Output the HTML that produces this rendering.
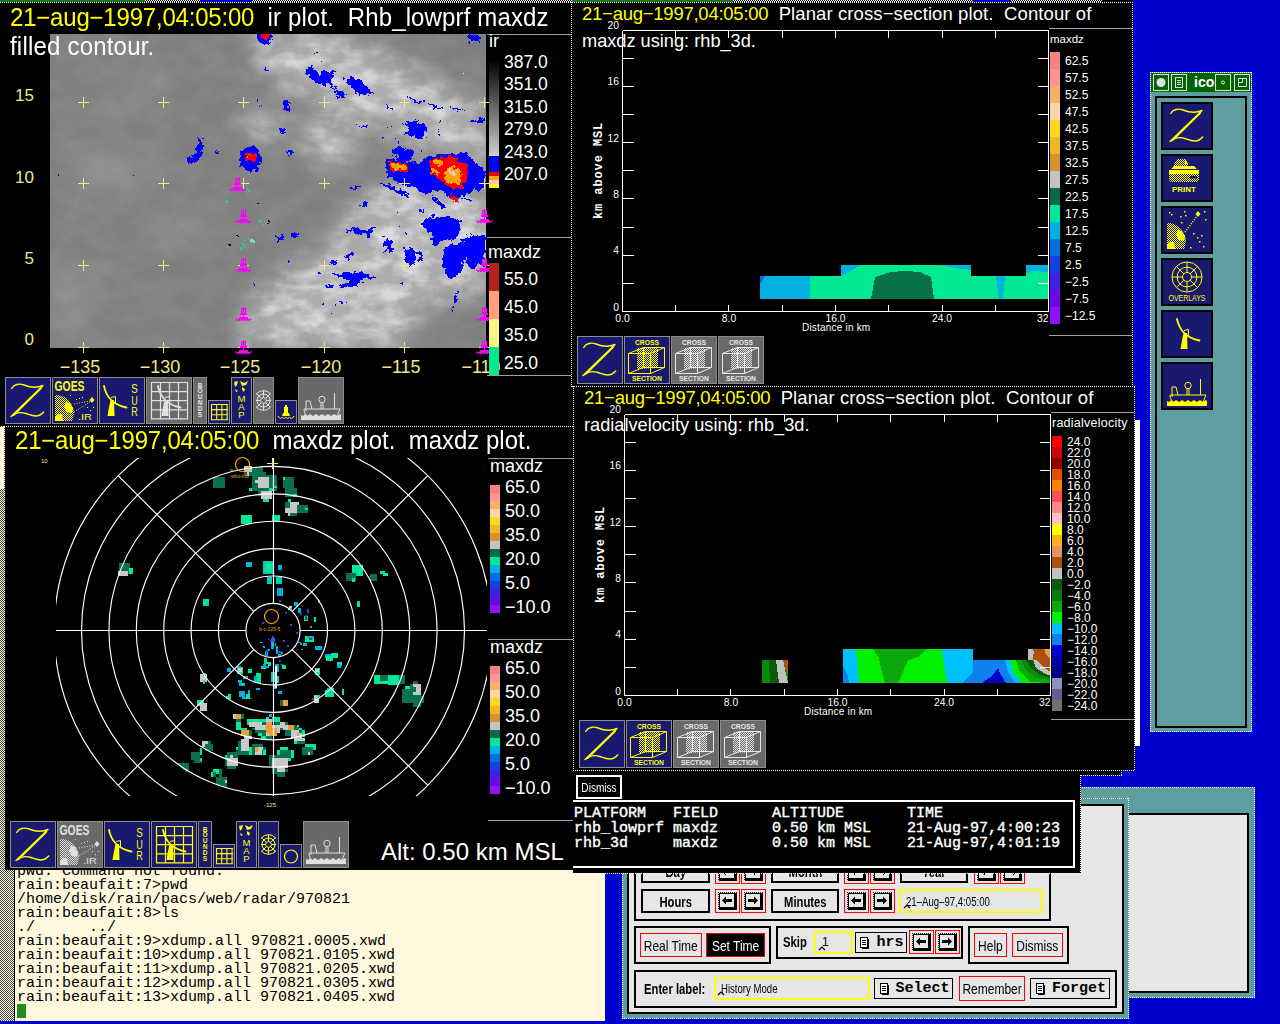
<!DOCTYPE html>
<html><head><meta charset="utf-8"><style>
*{margin:0;padding:0;box-sizing:border-box}
html,body{width:1280px;height:1024px;overflow:hidden;background:#0000cd;font-family:"Liberation Sans",sans-serif;}
.a{position:absolute}
.w{position:absolute;overflow:hidden}
.pg{position:absolute;width:1280px;height:1024px}
.t{position:absolute;white-space:nowrap;color:#fff;line-height:1}
.y{color:#ffff00}
.ly{color:#f0e68c}
.mono{font-family:"Liberation Mono",monospace}
.serif{font-family:"Liberation Serif",serif}
svg{position:absolute;left:0;top:0;overflow:visible}
</style></head><body>
<div class="w" style="left:0px;top:420px;width:605px;height:601px;background:#fff8dc;"><div class="pg" style="left:0px;top:-420px"><svg width="1280" height="1024" viewBox="0 0 1280 1024"><defs><pattern id="chkY" width="2" height="2" patternUnits="userSpaceOnUse"><rect width="1" height="1" fill="#ffff00"/><rect x="1" y="1" width="1" height="1" fill="#ffff00"/></pattern><pattern id="chkW" width="2" height="2" patternUnits="userSpaceOnUse"><rect width="1" height="1" fill="#e0e0e0"/><rect x="1" y="1" width="1" height="1" fill="#e0e0e0"/></pattern><pattern id="hatch" width="2" height="2" patternUnits="userSpaceOnUse"><rect width="2" height="2" fill="#fff8dc"/><rect width="1" height="1" fill="#444"/><rect x="1" y="1" width="1" height="1" fill="#444"/></pattern><pattern id="stip" width="2" height="2" patternUnits="userSpaceOnUse"><rect width="2" height="2" fill="#e6e6e6"/><rect width="1" height="1" fill="#222"/><rect x="1" y="1" width="1" height="1" fill="#222"/></pattern></defs><rect x="0" y="420" width="14" height="601" fill="url(#hatch)"/><rect x="0" y="427" width="4" height="62" fill="#fff8dc"/></svg><div class="a" style="left:14px;top:420px;width:1px;height:601px;background:#000;"></div><div class="t mono" style="left:17px;top:865px;font-size:15px;line-height:14px;color:#000">pwd: Command not found.</div><div class="t mono" style="left:17px;top:879px;font-size:15px;line-height:14px;color:#000">rain:beaufait:7&gt;pwd</div><div class="t mono" style="left:17px;top:893px;font-size:15px;line-height:14px;color:#000">/home/disk/rain/pacs/web/radar/970821</div><div class="t mono" style="left:17px;top:907px;font-size:15px;line-height:14px;color:#000">rain:beaufait:8&gt;ls</div><div class="t mono" style="left:17px;top:921px;font-size:15px;line-height:14px;color:#000">./&nbsp;&nbsp;&nbsp;&nbsp;&nbsp;&nbsp;../</div><div class="t mono" style="left:17px;top:935px;font-size:15px;line-height:14px;color:#000">rain:beaufait:9&gt;xdump.all 970821.0005.xwd</div><div class="t mono" style="left:17px;top:949px;font-size:15px;line-height:14px;color:#000">rain:beaufait:10&gt;xdump.all 970821.0105.xwd</div><div class="t mono" style="left:17px;top:963px;font-size:15px;line-height:14px;color:#000">rain:beaufait:11&gt;xdump.all 970821.0205.xwd</div><div class="t mono" style="left:17px;top:977px;font-size:15px;line-height:14px;color:#000">rain:beaufait:12&gt;xdump.all 970821.0305.xwd</div><div class="t mono" style="left:17px;top:991px;font-size:15px;line-height:14px;color:#000">rain:beaufait:13&gt;xdump.all 970821.0405.xwd</div><div class="a" style="left:17px;top:1004px;width:9px;height:14px;background:#228b22;"></div></div></div>
<div class="a" style="left:1000px;top:787px;width:255px;height:211px;background:#5f9ea0;"></div><div class="a" style="left:1128px;top:813px;width:121px;height:180px;background:#000;"></div><div class="a" style="left:1128px;top:815px;width:119px;height:176px;background:#e6e6e6;"></div>
<div class="a" style="left:1082px;top:787px;width:173px;height:1px;background:repeating-linear-gradient(90deg,#fff 0 1px,transparent 1px 2px)"></div>
<div class="a" style="left:1254px;top:787px;width:1px;height:211px;background:repeating-linear-gradient(180deg,#fff 0 1px,transparent 1px 2px)"></div>
<div class="a" style="left:1130px;top:997px;width:125px;height:1px;background:repeating-linear-gradient(90deg,#fff 0 1px,transparent 1px 2px)"></div>
<div class="w" style="left:622px;top:798px;width:507px;height:221px;background:#5f9ea0;"><div class="pg" style="left:-622px;top:-798px"><div class="a" style="left:621px;top:797px;width:509px;height:222px;background:#5f9ea0;"></div><div class="a" style="left:627px;top:804px;width:497px;height:210px;background:#000;"></div><div class="a" style="left:629px;top:806px;width:493px;height:206px;background:#e6e6e6;"></div><div class="a" style="left:634px;top:810px;width:417px;height:111px;border:2px solid #000"></div><div class="a" style="left:641px;top:860px;width:69px;height:23px;border:2px solid #000;background:#e6e6e6;color:#000;font-family:'Liberation Sans',sans-serif;font-size:15px;font-weight:bold;display:flex;justify-content:center;align-items:center;white-space:nowrap;"><span style="display:inline-block;transform:scaleX(0.75)">Day</span></div><div class="a" style="left:771px;top:860px;width:68px;height:23px;border:2px solid #000;background:#e6e6e6;color:#000;font-family:'Liberation Sans',sans-serif;font-size:15px;font-weight:bold;display:flex;justify-content:center;align-items:center;white-space:nowrap;"><span style="display:inline-block;transform:scaleX(0.75)">Month</span></div><div class="a" style="left:900px;top:860px;width:68px;height:23px;border:2px solid #000;background:#e6e6e6;color:#000;font-family:'Liberation Sans',sans-serif;font-size:15px;font-weight:bold;display:flex;justify-content:center;align-items:center;white-space:nowrap;"><span style="display:inline-block;transform:scaleX(0.75)">Year</span></div><div class="a" style="left:641px;top:889px;width:69px;height:24px;border:2px solid #000;background:#e6e6e6;color:#000;font-family:'Liberation Sans',sans-serif;font-size:15px;font-weight:bold;display:flex;justify-content:center;align-items:center;white-space:nowrap;"><span style="display:inline-block;transform:scaleX(0.75)">Hours</span></div><div class="a" style="left:771px;top:889px;width:68px;height:24px;border:2px solid #000;background:#e6e6e6;color:#000;font-family:'Liberation Sans',sans-serif;font-size:15px;font-weight:bold;display:flex;justify-content:center;align-items:center;white-space:nowrap;"><span style="display:inline-block;transform:scaleX(0.75)">Minutes</span></div><div class="a" style="left:899px;top:889px;width:144px;height:24px;border:2px solid #ffff00;background:#e6e6e6"></div><div class="t " style="left:906px;top:896px;font-size:12px;color:#000"><span style="display:inline-block;transform-origin:0 50%;transform:scaleX(0.8)">21–Aug–97,4:05:00</span></div><div class="a" style="left:634px;top:926px;width:137px;height:38px;border:2px solid #000"></div><div class="a" style="left:640px;top:933px;width:62px;height:24px;border:1px solid #ff0000;background:#e6e6e6;color:#000;font-family:'Liberation Sans',sans-serif;font-size:15px;font-weight:normal;display:flex;justify-content:center;align-items:center;white-space:nowrap;"><span style="display:inline-block;transform:scaleX(0.8)">Real Time</span></div><div class="a" style="left:706px;top:933px;width:59px;height:24px;border:1px solid #ff0000;background:#000;color:#fff;font-family:'Liberation Sans',sans-serif;font-size:15px;font-weight:normal;display:flex;justify-content:center;align-items:center;white-space:nowrap;"><span style="display:inline-block;transform:scaleX(0.8)">Set Time</span></div><div class="a" style="left:776px;top:926px;width:187px;height:33px;border:2px solid #000"></div><div class="t " style="left:783px;top:934px;font-size:15px;color:#000;font-weight:bold"><span style="display:inline-block;transform-origin:0 50%;transform:scaleX(0.75)">Skip</span></div><div class="a" style="left:814px;top:931px;width:39px;height:23px;border:2px solid #ffff00"></div><div class="t " style="left:822px;top:936px;font-size:12px;color:#000">1</div><div class="a" style="left:855px;top:932px;width:52px;height:21px;border:1px solid #000;background:#e6e6e6;color:#000;font-family:'Liberation Mono',monospace;font-size:15px;font-weight:bold;display:flex;justify-content:center;align-items:center;white-space:nowrap;">&nbsp;&nbsp;hrs</div><div class="a" style="left:968px;top:926px;width:101px;height:38px;border:2px solid #000"></div><div class="a" style="left:974px;top:933px;width:33px;height:24px;border:1px solid #ff0000;background:#e6e6e6;color:#000;font-family:'Liberation Sans',sans-serif;font-size:15px;font-weight:normal;display:flex;justify-content:center;align-items:center;white-space:nowrap;"><span style="display:inline-block;transform:scaleX(0.8)">Help</span></div><div class="a" style="left:1012px;top:933px;width:51px;height:24px;border:1px solid #ff0000;background:#e6e6e6;color:#000;font-family:'Liberation Sans',sans-serif;font-size:15px;font-weight:normal;display:flex;justify-content:center;align-items:center;white-space:nowrap;"><span style="display:inline-block;transform:scaleX(0.8)">Dismiss</span></div><div class="a" style="left:634px;top:970px;width:483px;height:38px;border:2px solid #000"></div><div class="t " style="left:644px;top:981px;font-size:15px;color:#000;font-weight:bold"><span style="display:inline-block;transform-origin:0 50%;transform:scaleX(0.75)">Enter label:</span></div><div class="a" style="left:714px;top:977px;width:156px;height:23px;border:2px solid #ffff00"></div><div class="t " style="left:721px;top:983px;font-size:12px;color:#000"><span style="display:inline-block;transform-origin:0 50%;transform:scaleX(0.8)">History Mode</span></div><div class="a" style="left:874px;top:978px;width:79px;height:21px;border:1px solid #000;background:#e6e6e6;color:#000;font-family:'Liberation Mono',monospace;font-size:15px;font-weight:bold;display:flex;justify-content:center;align-items:center;white-space:nowrap;">&nbsp;&nbsp;Select</div><div class="a" style="left:959px;top:976px;width:66px;height:25px;border:1px solid #ff0000;background:#e6e6e6;color:#000;font-family:'Liberation Sans',sans-serif;font-size:15px;font-weight:normal;display:flex;justify-content:center;align-items:center;white-space:nowrap;"><span style="display:inline-block;transform:scaleX(0.8)">Remember</span></div><div class="a" style="left:1030px;top:978px;width:80px;height:21px;border:1px solid #000;background:#e6e6e6;color:#000;font-family:'Liberation Mono',monospace;font-size:15px;font-weight:bold;display:flex;justify-content:center;align-items:center;white-space:nowrap;">&nbsp;&nbsp;Forget</div><svg width="1280" height="1024" viewBox="0 0 1280 1024"><defs><pattern id="chkY" width="2" height="2" patternUnits="userSpaceOnUse"><rect width="1" height="1" fill="#ffff00"/><rect x="1" y="1" width="1" height="1" fill="#ffff00"/></pattern><pattern id="chkW" width="2" height="2" patternUnits="userSpaceOnUse"><rect width="1" height="1" fill="#e0e0e0"/><rect x="1" y="1" width="1" height="1" fill="#e0e0e0"/></pattern><pattern id="hatch" width="2" height="2" patternUnits="userSpaceOnUse"><rect width="2" height="2" fill="#fff8dc"/><rect width="1" height="1" fill="#444"/><rect x="1" y="1" width="1" height="1" fill="#444"/></pattern><pattern id="stip" width="2" height="2" patternUnits="userSpaceOnUse"><rect width="2" height="2" fill="#e6e6e6"/><rect width="1" height="1" fill="#222"/><rect x="1" y="1" width="1" height="1" fill="#222"/></pattern></defs><g transform="translate(715 860)"><rect x="0.5" y="0.5" width="24" height="23" fill="#e6e6e6" stroke="#ff0000" stroke-width="1"/><rect x="3" y="3" width="19" height="18" fill="url(#stip)"/><rect x="4.5" y="4.5" width="15" height="14" fill="#e6e6e6" stroke="#000" stroke-width="1"/><rect x="20" y="4" width="2" height="17" fill="#000"/><rect x="4" y="19" width="18" height="2" fill="#000"/><path d="M7 11.5L11 7.5V10H17V13H11V15.5Z" fill="#000"/></g><g transform="translate(741 860)"><rect x="0.5" y="0.5" width="24" height="23" fill="#e6e6e6" stroke="#ff0000" stroke-width="1"/><rect x="3" y="3" width="19" height="18" fill="url(#stip)"/><rect x="4.5" y="4.5" width="15" height="14" fill="#e6e6e6" stroke="#000" stroke-width="1"/><rect x="20" y="4" width="2" height="17" fill="#000"/><rect x="4" y="19" width="18" height="2" fill="#000"/><path d="M17 11.5L13 7.5V10H7V13H13V15.5Z" fill="#000"/></g><g transform="translate(844 860)"><rect x="0.5" y="0.5" width="24" height="23" fill="#e6e6e6" stroke="#ff0000" stroke-width="1"/><rect x="3" y="3" width="19" height="18" fill="url(#stip)"/><rect x="4.5" y="4.5" width="15" height="14" fill="#e6e6e6" stroke="#000" stroke-width="1"/><rect x="20" y="4" width="2" height="17" fill="#000"/><rect x="4" y="19" width="18" height="2" fill="#000"/><path d="M7 11.5L11 7.5V10H17V13H11V15.5Z" fill="#000"/></g><g transform="translate(870 860)"><rect x="0.5" y="0.5" width="24" height="23" fill="#e6e6e6" stroke="#ff0000" stroke-width="1"/><rect x="3" y="3" width="19" height="18" fill="url(#stip)"/><rect x="4.5" y="4.5" width="15" height="14" fill="#e6e6e6" stroke="#000" stroke-width="1"/><rect x="20" y="4" width="2" height="17" fill="#000"/><rect x="4" y="19" width="18" height="2" fill="#000"/><path d="M17 11.5L13 7.5V10H7V13H13V15.5Z" fill="#000"/></g><g transform="translate(974 860)"><rect x="0.5" y="0.5" width="24" height="23" fill="#e6e6e6" stroke="#ff0000" stroke-width="1"/><rect x="3" y="3" width="19" height="18" fill="url(#stip)"/><rect x="4.5" y="4.5" width="15" height="14" fill="#e6e6e6" stroke="#000" stroke-width="1"/><rect x="20" y="4" width="2" height="17" fill="#000"/><rect x="4" y="19" width="18" height="2" fill="#000"/><path d="M7 11.5L11 7.5V10H17V13H11V15.5Z" fill="#000"/></g><g transform="translate(1000 860)"><rect x="0.5" y="0.5" width="24" height="23" fill="#e6e6e6" stroke="#ff0000" stroke-width="1"/><rect x="3" y="3" width="19" height="18" fill="url(#stip)"/><rect x="4.5" y="4.5" width="15" height="14" fill="#e6e6e6" stroke="#000" stroke-width="1"/><rect x="20" y="4" width="2" height="17" fill="#000"/><rect x="4" y="19" width="18" height="2" fill="#000"/><path d="M17 11.5L13 7.5V10H7V13H13V15.5Z" fill="#000"/></g><g transform="translate(715 889)"><rect x="0.5" y="0.5" width="24" height="23" fill="#e6e6e6" stroke="#ff0000" stroke-width="1"/><rect x="3" y="3" width="19" height="18" fill="url(#stip)"/><rect x="4.5" y="4.5" width="15" height="14" fill="#e6e6e6" stroke="#000" stroke-width="1"/><rect x="20" y="4" width="2" height="17" fill="#000"/><rect x="4" y="19" width="18" height="2" fill="#000"/><path d="M7 11.5L11 7.5V10H17V13H11V15.5Z" fill="#000"/></g><g transform="translate(741 889)"><rect x="0.5" y="0.5" width="24" height="23" fill="#e6e6e6" stroke="#ff0000" stroke-width="1"/><rect x="3" y="3" width="19" height="18" fill="url(#stip)"/><rect x="4.5" y="4.5" width="15" height="14" fill="#e6e6e6" stroke="#000" stroke-width="1"/><rect x="20" y="4" width="2" height="17" fill="#000"/><rect x="4" y="19" width="18" height="2" fill="#000"/><path d="M17 11.5L13 7.5V10H7V13H13V15.5Z" fill="#000"/></g><g transform="translate(844 889)"><rect x="0.5" y="0.5" width="24" height="23" fill="#e6e6e6" stroke="#ff0000" stroke-width="1"/><rect x="3" y="3" width="19" height="18" fill="url(#stip)"/><rect x="4.5" y="4.5" width="15" height="14" fill="#e6e6e6" stroke="#000" stroke-width="1"/><rect x="20" y="4" width="2" height="17" fill="#000"/><rect x="4" y="19" width="18" height="2" fill="#000"/><path d="M7 11.5L11 7.5V10H17V13H11V15.5Z" fill="#000"/></g><g transform="translate(870 889)"><rect x="0.5" y="0.5" width="24" height="23" fill="#e6e6e6" stroke="#ff0000" stroke-width="1"/><rect x="3" y="3" width="19" height="18" fill="url(#stip)"/><rect x="4.5" y="4.5" width="15" height="14" fill="#e6e6e6" stroke="#000" stroke-width="1"/><rect x="20" y="4" width="2" height="17" fill="#000"/><rect x="4" y="19" width="18" height="2" fill="#000"/><path d="M17 11.5L13 7.5V10H7V13H13V15.5Z" fill="#000"/></g><g transform="translate(909 930)"><rect x="0.5" y="0.5" width="24" height="23" fill="#e6e6e6" stroke="#ff0000" stroke-width="1"/><rect x="3" y="3" width="19" height="18" fill="url(#stip)"/><rect x="4.5" y="4.5" width="15" height="14" fill="#e6e6e6" stroke="#000" stroke-width="1"/><rect x="20" y="4" width="2" height="17" fill="#000"/><rect x="4" y="19" width="18" height="2" fill="#000"/><path d="M7 11.5L11 7.5V10H17V13H11V15.5Z" fill="#000"/></g><g transform="translate(935 930)"><rect x="0.5" y="0.5" width="24" height="23" fill="#e6e6e6" stroke="#ff0000" stroke-width="1"/><rect x="3" y="3" width="19" height="18" fill="url(#stip)"/><rect x="4.5" y="4.5" width="15" height="14" fill="#e6e6e6" stroke="#000" stroke-width="1"/><rect x="20" y="4" width="2" height="17" fill="#000"/><rect x="4" y="19" width="18" height="2" fill="#000"/><path d="M17 11.5L13 7.5V10H7V13H13V15.5Z" fill="#000"/></g><g transform="translate(860 937)"><rect x="0.5" y="0.5" width="7" height="10" fill="#fff" stroke="#000"/><path d="M2 3.5H6M2 5.5H6M2 7.5H6" stroke="#000" stroke-width="1"/><path d="M8.5 2V11.5H2" stroke="#000" fill="none"/></g><g transform="translate(880 983)"><rect x="0.5" y="0.5" width="7" height="10" fill="#fff" stroke="#000"/><path d="M2 3.5H6M2 5.5H6M2 7.5H6" stroke="#000" stroke-width="1"/><path d="M8.5 2V11.5H2" stroke="#000" fill="none"/></g><g transform="translate(1036 983)"><rect x="0.5" y="0.5" width="7" height="10" fill="#fff" stroke="#000"/><path d="M2 3.5H6M2 5.5H6M2 7.5H6" stroke="#000" stroke-width="1"/><path d="M8.5 2V11.5H2" stroke="#000" fill="none"/></g><path d="M904 908L907 905L910 908M819 950L822 947L825 950M718 995L721 992L724 995" stroke="#000" stroke-width="1.2" fill="none"/></svg></div></div>
<div class="a" style="left:622px;top:798px;width:1px;height:221px;background:repeating-linear-gradient(180deg,#fff 0 1px,transparent 1px 2px)"></div>
<div class="a" style="left:622px;top:1018px;width:507px;height:1px;background:repeating-linear-gradient(90deg,#fff 0 1px,transparent 1px 2px)"></div>
<div class="a" style="left:1128px;top:798px;width:1px;height:221px;background:repeating-linear-gradient(180deg,#fff 0 1px,transparent 1px 2px)"></div>
<div class="a" style="left:1081px;top:798px;width:48px;height:1px;background:repeating-linear-gradient(90deg,#fff 0 1px,transparent 1px 2px)"></div>
<div class="w" style="left:5px;top:427px;width:569px;height:443px;background:#000;"><div class="pg" style="left:-5px;top:-427px"><svg width="1280" height="1024" viewBox="0 0 1280 1024"><g shape-rendering="crispEdges"><rect x="213" y="477" width="12" height="11" fill="#0b7050"/><rect x="230" y="469" width="3" height="2" fill="#0b7050"/><rect x="249" y="467" width="14" height="9" fill="#0b7050"/><rect x="252" y="475" width="25" height="16" fill="#0b7050"/><rect x="244" y="472" width="5" height="4" fill="#0b7050"/><rect x="258" y="491" width="3" height="5" fill="#0b7050"/><rect x="263" y="472" width="3" height="4" fill="#0b7050"/><rect x="244" y="466" width="8" height="6" fill="#c8c8c8"/><rect x="247" y="472" width="2" height="4" fill="#c8c8c8"/><rect x="258" y="477" width="11" height="11" fill="#c8c8c8"/><rect x="255" y="480" width="3" height="3" fill="#c8c8c8"/><rect x="249" y="488" width="3" height="3" fill="#00e898"/><rect x="269" y="488" width="4" height="3" fill="#00e898"/><rect x="274" y="486" width="3" height="2" fill="#00e898"/><rect x="261" y="491" width="11" height="8" fill="#c8c8c8"/><rect x="263" y="499" width="6" height="3" fill="#00e898"/><rect x="283" y="477" width="11" height="11" fill="#0b7050"/><rect x="285" y="488" width="12" height="9" fill="#0b7050"/><rect x="283" y="477" width="2" height="3" fill="#00e898"/><rect x="293" y="494" width="4" height="3" fill="#00e898"/><rect x="288" y="499" width="3" height="3" fill="#00e898"/><rect x="285" y="502" width="5" height="6" fill="#0b7050"/><rect x="290" y="502" width="9" height="11" fill="#c8c8c8"/><rect x="285" y="508" width="5" height="5" fill="#c8c8c8"/><rect x="288" y="513" width="2" height="3" fill="#c8c8c8"/><rect x="297" y="505" width="11" height="8" fill="#0b7050"/><rect x="290" y="513" width="7" height="3" fill="#0b7050"/><rect x="305" y="508" width="3" height="2" fill="#00e898"/><rect x="241" y="515" width="11" height="9" fill="#00e898"/><rect x="272" y="515" width="8" height="6" fill="#00e898"/><rect x="119" y="563" width="11" height="11" fill="#0b7050"/><rect x="129" y="568" width="4" height="6" fill="#00e898"/><rect x="118" y="571" width="10" height="5" fill="#c8c8c8"/><rect x="203" y="599" width="6" height="7" fill="#00e898"/><rect x="206" y="602" width="3" height="4" fill="#00d0b0"/><rect x="246" y="562" width="6" height="5" fill="#00b0e0"/><rect x="263" y="561" width="10" height="13" fill="#00d0b0"/><rect x="265" y="564" width="7" height="8" fill="#00e898"/><rect x="278" y="565" width="4" height="5" fill="#00b0e0"/><rect x="267" y="577" width="5" height="7" fill="#00d0b0"/><rect x="276" y="577" width="6" height="7" fill="#00d0b0"/><rect x="277" y="588" width="6" height="8" fill="#00b0e0"/><rect x="294" y="602" width="4" height="4" fill="#00b0e0"/><rect x="289" y="606" width="3" height="4" fill="#c8c8c8"/><rect x="298" y="608" width="2" height="5" fill="#00b0e0"/><rect x="352" y="565" width="11" height="11" fill="#00e898"/><rect x="346" y="573" width="10" height="8" fill="#0b7050"/><rect x="352" y="578" width="3" height="4" fill="#00e898"/><rect x="370" y="574" width="7" height="7" fill="#0b7050"/><rect x="380" y="571" width="5" height="3" fill="#00e898"/><rect x="383" y="573" width="5" height="3" fill="#00e898"/><rect x="357" y="601" width="3" height="6" fill="#00e898"/><rect x="294" y="602" width="4" height="4" fill="#00b0e0"/><rect x="298" y="608" width="3" height="5" fill="#00b0e0"/><rect x="288" y="608" width="4" height="2" fill="#c8c8c8"/><rect x="304" y="616" width="4" height="5" fill="#00e898"/><rect x="305" y="617" width="2" height="3" fill="#084838"/><rect x="314" y="617" width="2" height="5" fill="#00e898"/><rect x="307" y="609" width="2" height="4" fill="#1050e0"/><rect x="318" y="600" width="2" height="3" fill="#00b0e0"/><rect x="306" y="636" width="7" height="4" fill="#00d0b0"/><rect x="200" y="674" width="7" height="8" fill="#c8c8c8"/><rect x="203" y="673" width="3" height="3" fill="#00e898"/><rect x="203" y="680" width="2" height="4" fill="#00e898"/><rect x="197" y="700" width="7" height="6" fill="#00e898"/><rect x="200" y="703" width="7" height="8" fill="#c8c8c8"/><rect x="227" y="668" width="4" height="4" fill="#00b0e0"/><rect x="237" y="667" width="6" height="7" fill="#00e898"/><rect x="237" y="666" width="4" height="3" fill="#00b0e0"/><rect x="238" y="668" width="4" height="4" fill="#c8c8c8"/><rect x="248" y="669" width="4" height="4" fill="#00e898"/><rect x="256" y="673" width="5" height="10" fill="#00e898"/><rect x="254" y="676" width="3" height="7" fill="#00b0e0"/><rect x="243" y="676" width="5" height="3" fill="#00b0e0"/><rect x="238" y="680" width="4" height="3" fill="#00b0e0"/><rect x="239" y="683" width="6" height="3" fill="#00b0e0"/><rect x="241" y="683" width="3" height="2" fill="#00e898"/><rect x="256" y="688" width="4" height="2" fill="#00b0e0"/><rect x="239" y="691" width="6" height="6" fill="#00b0e0"/><rect x="242" y="697" width="4" height="2" fill="#00b0e0"/><rect x="246" y="694" width="4" height="5" fill="#00e898"/><rect x="248" y="690" width="2" height="4" fill="#00b0e0"/><rect x="250" y="698" width="2" height="1" fill="#0b7050"/><rect x="226" y="696" width="5" height="3" fill="#00e898"/><rect x="228" y="694" width="3" height="2" fill="#00e898"/><rect x="272" y="636" width="2" height="2" fill="#7020f0"/><rect x="271" y="638" width="4" height="4" fill="#3060e8"/><rect x="271" y="642" width="3" height="7" fill="#00b0e0"/><rect x="272" y="643" width="2" height="3" fill="#00e898"/><rect x="267" y="649" width="3" height="2" fill="#00b0e0"/><rect x="265" y="651" width="3" height="5" fill="#00b0e0"/><rect x="266" y="652" width="1" height="3" fill="#1050e0"/><rect x="275" y="643" width="1" height="3" fill="#00e898"/><rect x="276" y="646" width="2" height="8" fill="#00b0e0"/><rect x="278" y="651" width="3" height="2" fill="#1050e0"/><rect x="278" y="654" width="3" height="3" fill="#00b0e0"/><rect x="260" y="642" width="3" height="1" fill="#00b0e0"/><rect x="268" y="639" width="2" height="1" fill="#7020f0"/><rect x="264" y="658" width="3" height="6" fill="#00d0b0"/><rect x="261" y="666" width="5" height="3" fill="#00e898"/><rect x="263" y="664" width="6" height="4" fill="#00b0e0"/><rect x="267" y="662" width="4" height="4" fill="#00e898"/><rect x="266" y="664" width="2" height="2" fill="#000"/><rect x="279" y="660" width="2" height="2" fill="#1050e0"/><rect x="282" y="665" width="4" height="4" fill="#00e898"/><rect x="281" y="664" width="2" height="1" fill="#00b0e0"/><rect x="275" y="664" width="4" height="8" fill="#00b0e0"/><rect x="271" y="672" width="4" height="10" fill="#00d0b0"/><rect x="277" y="676" width="2" height="7" fill="#00e898"/><rect x="274" y="684" width="3" height="5" fill="#00b0e0"/><rect x="275" y="666" width="2" height="22" fill="#ffffff"/><rect x="278" y="691" width="4" height="3" fill="#00b0e0"/><rect x="280" y="700" width="3" height="6" fill="#0b7050"/><rect x="283" y="700" width="5" height="6" fill="#e8a030"/><rect x="305" y="636" width="9" height="6" fill="#00e898"/><rect x="307" y="636" width="7" height="3" fill="#00b0e0"/><rect x="307" y="638" width="1" height="1" fill="#e8a030"/><rect x="309" y="638" width="3" height="2" fill="#0b7050"/><rect x="303" y="643" width="4" height="3" fill="#00b0e0"/><rect x="298" y="642" width="3" height="1" fill="#00b0e0"/><rect x="301" y="649" width="2" height="1" fill="#00b0e0"/><rect x="315" y="646" width="7" height="4" fill="#00b0e0"/><rect x="325" y="654" width="6" height="4" fill="#00b0e0"/><rect x="326" y="656" width="7" height="5" fill="#00e898"/><rect x="331" y="653" width="7" height="5" fill="#00e898"/><rect x="337" y="662" width="5" height="4" fill="#00e898"/><rect x="337" y="664" width="4" height="4" fill="#00b0e0"/><rect x="315" y="668" width="5" height="7" fill="#00e898"/><rect x="315" y="669" width="4" height="3" fill="#c8c8c8"/><rect x="325" y="690" width="9" height="7" fill="#00e898"/><rect x="327" y="688" width="7" height="4" fill="#00e898"/><rect x="327" y="688" width="3" height="2" fill="#00b0e0"/><rect x="314" y="695" width="5" height="7" fill="#c8c8c8"/><rect x="312" y="698" width="2" height="2" fill="#0b7050"/><rect x="317" y="695" width="3" height="3" fill="#00e898"/><rect x="342" y="689" width="2" height="6" fill="#00e898"/><rect x="374" y="675" width="6" height="9" fill="#00e898"/><rect x="380" y="675" width="8" height="6" fill="#0b7050"/><rect x="380" y="681" width="11" height="3" fill="#00e898"/><rect x="388" y="675" width="11" height="10" fill="#00e898"/><rect x="399" y="675" width="6" height="9" fill="#0b7050"/><rect x="402" y="689" width="11" height="14" fill="#0b7050"/><rect x="410" y="684" width="11" height="12" fill="#0b7050"/><rect x="413" y="681" width="5" height="4" fill="#0b7050"/><rect x="413" y="696" width="11" height="7" fill="#0b7050"/><rect x="413" y="703" width="8" height="4" fill="#0b7050"/><rect x="413" y="684" width="8" height="11" fill="#c8c8c8"/><rect x="413" y="687" width="3" height="5" fill="#0b7050"/><rect x="405" y="686" width="5" height="3" fill="#00e898"/><rect x="314" y="700" width="5" height="3" fill="#c8c8c8"/><rect x="233" y="714" width="3" height="5" fill="#c8c8c8"/><rect x="236" y="714" width="5" height="5" fill="#e8a030"/><rect x="241" y="714" width="3" height="5" fill="#0b7050"/><rect x="236" y="719" width="5" height="3" fill="#0b7050"/><rect x="236" y="722" width="5" height="8" fill="#00e898"/><rect x="239" y="728" width="8" height="2" fill="#00e898"/><rect x="247" y="719" width="25" height="3" fill="#00e898"/><rect x="247" y="719" width="3" height="6" fill="#00e898"/><rect x="249" y="722" width="13" height="5" fill="#c8c8c8"/><rect x="255" y="725" width="11" height="5" fill="#c8c8c8"/><rect x="262" y="722" width="4" height="3" fill="#0b7050"/><rect x="269" y="714" width="3" height="3" fill="#00b0e0"/><rect x="266" y="717" width="3" height="2" fill="#00e898"/><rect x="266" y="719" width="6" height="3" fill="#c8c8c8"/><rect x="272" y="717" width="8" height="5" fill="#00e898"/><rect x="275" y="722" width="5" height="3" fill="#0b7050"/><rect x="266" y="722" width="6" height="14" fill="#e8a030"/><rect x="272" y="728" width="5" height="8" fill="#e8a030"/><rect x="272" y="725" width="8" height="3" fill="#c8c8c8"/><rect x="277" y="728" width="3" height="5" fill="#c8c8c8"/><rect x="280" y="722" width="8" height="8" fill="#c8c8c8"/><rect x="285" y="722" width="3" height="3" fill="#0b7050"/><rect x="280" y="728" width="3" height="2" fill="#0b7050"/><rect x="288" y="725" width="6" height="5" fill="#e8a030"/><rect x="294" y="725" width="5" height="5" fill="#0b7050"/><rect x="297" y="725" width="2" height="2" fill="#00e898"/><rect x="299" y="728" width="3" height="2" fill="#00e898"/><rect x="302" y="730" width="3" height="7" fill="#00e898"/><rect x="288" y="730" width="11" height="3" fill="#c8c8c8"/><rect x="291" y="733" width="11" height="5" fill="#c8c8c8"/><rect x="297" y="733" width="2" height="5" fill="#e8a030"/><rect x="299" y="730" width="3" height="3" fill="#0b7050"/><rect x="285" y="730" width="6" height="6" fill="#0b7050"/><rect x="294" y="738" width="11" height="3" fill="#c8c8c8"/><rect x="294" y="741" width="3" height="3" fill="#00e898"/><rect x="297" y="741" width="8" height="3" fill="#0b7050"/><rect x="255" y="730" width="11" height="3" fill="#0b7050"/><rect x="262" y="733" width="4" height="3" fill="#0b7050"/><rect x="258" y="733" width="4" height="3" fill="#00e898"/><rect x="261" y="736" width="5" height="3" fill="#00e898"/><rect x="266" y="736" width="6" height="3" fill="#0b7050"/><rect x="266" y="733" width="3" height="3" fill="#c8c8c8"/><rect x="241" y="730" width="8" height="6" fill="#e8a030"/><rect x="249" y="730" width="3" height="6" fill="#0b7050"/><rect x="252" y="728" width="3" height="2" fill="#0b7050"/><rect x="238" y="741" width="3" height="10" fill="#0b7050"/><rect x="241" y="739" width="8" height="12" fill="#c8c8c8"/><rect x="244" y="736" width="8" height="3" fill="#c8c8c8"/><rect x="236" y="747" width="2" height="3" fill="#00e898"/><rect x="236" y="751" width="13" height="4" fill="#0b7050"/><rect x="249" y="747" width="3" height="8" fill="#00e898"/><rect x="252" y="744" width="3" height="11" fill="#0b7050"/><rect x="252" y="744" width="11" height="3" fill="#0b7050"/><rect x="255" y="747" width="3" height="5" fill="#e8a030"/><rect x="258" y="747" width="5" height="5" fill="#c8c8c8"/><rect x="255" y="752" width="7" height="3" fill="#c8c8c8"/><rect x="263" y="747" width="3" height="3" fill="#0b7050"/><rect x="263" y="750" width="3" height="5" fill="#00e898"/><rect x="262" y="750" width="1" height="5" fill="#0b7050"/><rect x="227" y="752" width="11" height="6" fill="#0b7050"/><rect x="230" y="755" width="3" height="3" fill="#c8c8c8"/><rect x="225" y="755" width="2" height="3" fill="#00e898"/><rect x="225" y="758" width="2" height="8" fill="#0b7050"/><rect x="227" y="758" width="11" height="8" fill="#c8c8c8"/><rect x="227" y="766" width="9" height="3" fill="#0b7050"/><rect x="202" y="741" width="6" height="6" fill="#c8c8c8"/><rect x="208" y="741" width="3" height="3" fill="#0b7050"/><rect x="205" y="744" width="8" height="7" fill="#0b7050"/><rect x="200" y="748" width="2" height="7" fill="#00e898"/><rect x="191" y="752" width="9" height="8" fill="#0b7050"/><rect x="194" y="760" width="8" height="3" fill="#0b7050"/><rect x="200" y="758" width="2" height="3" fill="#00e898"/><rect x="185" y="763" width="4" height="9" fill="#0b7050"/><rect x="213" y="769" width="6" height="3" fill="#00e898"/><rect x="211" y="772" width="2" height="5" fill="#00e898"/><rect x="213" y="772" width="3" height="5" fill="#0b7050"/><rect x="216" y="772" width="3" height="2" fill="#00e898"/><rect x="219" y="769" width="3" height="8" fill="#0b7050"/><rect x="216" y="777" width="11" height="8" fill="#0b7050"/><rect x="225" y="780" width="2" height="3" fill="#c8c8c8"/><rect x="222" y="785" width="5" height="2" fill="#0b7050"/><rect x="280" y="747" width="8" height="3" fill="#00e898"/><rect x="277" y="750" width="3" height="5" fill="#00e898"/><rect x="288" y="750" width="6" height="5" fill="#00e898"/><rect x="291" y="755" width="3" height="3" fill="#00e898"/><rect x="280" y="750" width="11" height="11" fill="#0b7050"/><rect x="280" y="758" width="3" height="3" fill="#00e898"/><rect x="288" y="758" width="3" height="3" fill="#00e898"/><rect x="269" y="755" width="11" height="3" fill="#0b7050"/><rect x="269" y="755" width="3" height="11" fill="#0b7050"/><rect x="272" y="758" width="16" height="10" fill="#c8c8c8"/><rect x="277" y="768" width="8" height="4" fill="#c8c8c8"/><rect x="272" y="768" width="5" height="6" fill="#0b7050"/><rect x="285" y="769" width="3" height="3" fill="#0b7050"/><rect x="277" y="772" width="8" height="5" fill="#0b7050"/><rect x="305" y="744" width="11" height="3" fill="#00e898"/><rect x="313" y="747" width="3" height="3" fill="#00e898"/><rect x="302" y="747" width="11" height="8" fill="#0b7050"/><rect x="308" y="752" width="2" height="3" fill="#c8c8c8"/><path d="M177 763L189 763L189 771L183 770Z" fill="#0b7050"/><rect x="285" y="612" width="2" height="2" fill="#1050e0"/><rect x="290" y="608" width="2" height="2" fill="#00b0e0"/><rect x="300" y="613" width="2" height="2" fill="#1050e0"/><rect x="305" y="615" width="2" height="2" fill="#1050e0"/><rect x="283" y="640" width="2" height="2" fill="#8020f0"/><rect x="287" y="645" width="2" height="2" fill="#1050e0"/><rect x="266" y="650" width="2" height="2" fill="#1050e0"/><rect x="270" y="640" width="2" height="2" fill="#8020f0"/><rect x="262" y="622" width="2" height="2" fill="#1050e0"/><rect x="279" y="600" width="2" height="2" fill="#1050e0"/><rect x="290" y="624" width="2" height="2" fill="#8020f0"/><rect x="296" y="632" width="2" height="2" fill="#1050e0"/><rect x="310" y="626" width="2" height="2" fill="#00b0e0"/><rect x="281" y="652" width="2" height="2" fill="#00b0e0"/><rect x="263" y="646" width="2" height="2" fill="#00b0e0"/><rect x="300" y="643" width="2" height="2" fill="#00b0e0"/></g><clipPath id="rclip"><rect x="56" y="458" width="431" height="338"/></clipPath><g clip-path="url(#rclip)" fill="none" stroke="#fff" stroke-width="1.15"><circle cx="273" cy="630.5" r="27.1"/><circle cx="273" cy="630.5" r="54.5"/><circle cx="273" cy="630.5" r="81.9"/><circle cx="273" cy="630.5" r="109.3"/><circle cx="273" cy="630.5" r="136.7"/><circle cx="273" cy="630.5" r="164.1"/><circle cx="273" cy="630.5" r="191.5"/><circle cx="273" cy="630.5" r="218.9"/><path d="M54.099999999999994 630.5H245.9M300.1 630.5H491.9M273.5 411.6V603.4M273.5 657.6V849.4M253.8 611.3L118.2 475.7M253.8 649.7L118.2 785.3M292.2 611.3L427.8 475.7M292.2 649.7L427.8 785.3"/></g><circle cx="271.5" cy="616.5" r="7" fill="none" stroke="#ffa500" stroke-width="1.2"/><circle cx="242.5" cy="464.5" r="7" fill="none" stroke="#ffa500" stroke-width="1.2"/><rect x="258" y="628" width="26" height="3" fill="#000"/><path d="M267 463.5H278M272.5 458V469" stroke="#f0e68c" stroke-width="1" fill="none" shape-rendering="crispEdges"/><path d="M488 458.5H573M488 639.5H573M488 820.5H573" stroke="#a0a0a0" stroke-width="1" fill="none" shape-rendering="crispEdges"/><rect x="490" y="485" width="10" height="8" fill="#fa8080"/><rect x="490" y="493" width="10" height="8" fill="#ff9494"/><rect x="490" y="501" width="10" height="8" fill="#fbb067"/><rect x="490" y="509" width="10" height="8" fill="#fdd5ac"/><rect x="490" y="517" width="10" height="8" fill="#fada1a"/><rect x="490" y="525" width="10" height="8" fill="#efb820"/><rect x="490" y="533" width="10" height="8" fill="#da9030"/><rect x="490" y="541" width="10" height="8" fill="#c4c4c4"/><rect x="490" y="549" width="10" height="8" fill="#086848"/><rect x="490" y="557" width="10" height="8" fill="#00e898"/><rect x="490" y="565" width="10" height="8" fill="#00b0e0"/><rect x="490" y="573" width="10" height="8" fill="#0070e0"/><rect x="490" y="581" width="10" height="8" fill="#1840e0"/><rect x="490" y="589" width="10" height="8" fill="#4020e0"/><rect x="490" y="597" width="10" height="8" fill="#6808e8"/><rect x="490" y="605" width="10" height="8" fill="#9010f8"/><rect x="490" y="666" width="10" height="8" fill="#fa8080"/><rect x="490" y="674" width="10" height="8" fill="#ff9494"/><rect x="490" y="682" width="10" height="8" fill="#fbb067"/><rect x="490" y="690" width="10" height="8" fill="#fdd5ac"/><rect x="490" y="698" width="10" height="8" fill="#fada1a"/><rect x="490" y="706" width="10" height="8" fill="#efb820"/><rect x="490" y="714" width="10" height="8" fill="#da9030"/><rect x="490" y="722" width="10" height="8" fill="#c4c4c4"/><rect x="490" y="730" width="10" height="8" fill="#086848"/><rect x="490" y="738" width="10" height="8" fill="#00e898"/><rect x="490" y="746" width="10" height="8" fill="#00b0e0"/><rect x="490" y="754" width="10" height="8" fill="#0070e0"/><rect x="490" y="762" width="10" height="8" fill="#1840e0"/><rect x="490" y="770" width="10" height="8" fill="#4020e0"/><rect x="490" y="778" width="10" height="8" fill="#6808e8"/><rect x="490" y="786" width="10" height="8" fill="#9010f8"/><rect x="10.5" y="821.5" width="45" height="46" fill="#191970" stroke="#8c8c8c" stroke-width="1"/><g transform="translate(10 821)" ><path d="M6.7 11.5C9 7.5 14 6 19 8S30 12 38 8.5L6 39.5C10 36 15 34.5 21 36.5S33 41.5 38.7 35" fill="none" stroke="#ffff00" stroke-width="1.4" stroke-linejoin="round" stroke-linecap="round"/><path d="M38 8.5L6 39.5L9 39L36.5 12Z" fill="#ffff00"/></g><rect x="57.5" y="821.5" width="45" height="46" fill="#696969" stroke="#8c8c8c" stroke-width="1"/><g transform="translate(57 821)" ><text x="2.5" y="14.3" font-family="Liberation Sans" font-weight="bold" font-size="15" fill="#e0e0e0" textLength="30" lengthAdjust="spacingAndGlyphs">GOES</text><path d="M3 18C12 17 20 24 22 34C22 38 21 42 20 44L3 44Z" fill="url(#chkW)"/><path d="M14 25L18 26L21 31L20 36L15 35L12 30Z" fill="#e0e0e0"/><path d="M3 40L5 37L10 37L11 44L3 44Z" fill="#e0e0e0"/><path d="M40 20L42.5 23L40 26L37.5 23Z" fill="#e0e0e0"/><path d="M22 27L38 24M22 35L38 25" stroke="#e0e0e0" stroke-width="1" stroke-dasharray="1 1.6" fill="none"/><rect x="18" y="18" width="1" height="1" fill="#e0e0e0"/><rect x="24" y="22" width="1" height="1" fill="#e0e0e0"/><rect x="27" y="21" width="1" height="1" fill="#e0e0e0"/><rect x="30" y="20" width="1" height="1" fill="#e0e0e0"/><rect x="41" y="30" width="1" height="1" fill="#e0e0e0"/><rect x="38" y="33" width="1" height="1" fill="#e0e0e0"/><rect x="35" y="30" width="1" height="1" fill="#e0e0e0"/><text x="26" y="43" font-family="Liberation Sans" font-size="9" fill="#e0e0e0" textLength="14" lengthAdjust="spacingAndGlyphs">.IR</text></g><rect x="104.5" y="821.5" width="45" height="46" fill="#191970" stroke="#8c8c8c" stroke-width="1"/><g transform="translate(104 821)" ><g transform="translate(5 9)" ><path d="M0 0C2 10 9 19 22.5 21.5" fill="none" stroke="#ffff00" stroke-width="1.8" stroke-linecap="round"/><path d="M7 11.5L11.5 10.5L11.5 17" fill="none" stroke="#ffff00" stroke-width="1"/><path d="M6.5 14L10 14L10.5 30L3.5 30L4.5 24Z" fill="#ffff00"/></g><text x="32.25" y="16.0" font-family="Liberation Sans" font-weight="normal" font-size="13.5" fill="#ffff00" textLength="6.5" lengthAdjust="spacingAndGlyphs">S</text><text x="32.25" y="27.7" font-family="Liberation Sans" font-weight="normal" font-size="13.5" fill="#ffff00" textLength="6.5" lengthAdjust="spacingAndGlyphs">U</text><text x="32.25" y="39.4" font-family="Liberation Sans" font-weight="normal" font-size="13.5" fill="#ffff00" textLength="6.5" lengthAdjust="spacingAndGlyphs">R</text></g><rect x="151.5" y="821.5" width="45" height="46" fill="#191970" stroke="#8c8c8c" stroke-width="1"/><g transform="translate(151 821)" ><path d="M5.5 5V42M14.5 5V42M23.5 5V42M32.5 5V42M41.5 5V42M5 5.5H42M5 14.6H42M5 23.7H42M5 32.8H42M5 41.9H42" stroke="#ffff00" stroke-width="1.2" fill="none"/><g transform="translate(12 9)" ><path d="M0 0C2 10 9 19 22.5 21.5" fill="none" stroke="#ffff00" stroke-width="1.8" stroke-linecap="round"/><path d="M7 11.5L11.5 10.5L11.5 17" fill="none" stroke="#ffff00" stroke-width="1"/><path d="M6.5 14L10 14L10.5 30L3.5 30L4.5 24Z" fill="#ffff00"/></g></g><rect x="198.5" y="821.5" width="13" height="46" fill="#191970" stroke="#8c8c8c" stroke-width="1"/><g transform="translate(198 821)" ><text x="7" y="10.5" text-anchor="middle" font-family="Liberation Sans" font-weight="bold" font-size="6.5" fill="#ffff00">B</text><text x="7" y="16.4" text-anchor="middle" font-family="Liberation Sans" font-weight="bold" font-size="6.5" fill="#ffff00">O</text><text x="7" y="22.3" text-anchor="middle" font-family="Liberation Sans" font-weight="bold" font-size="6.5" fill="#ffff00">U</text><text x="7" y="28.200000000000003" text-anchor="middle" font-family="Liberation Sans" font-weight="bold" font-size="6.5" fill="#ffff00">N</text><text x="7" y="34.1" text-anchor="middle" font-family="Liberation Sans" font-weight="bold" font-size="6.5" fill="#ffff00">D</text><text x="7" y="40.0" text-anchor="middle" font-family="Liberation Sans" font-weight="bold" font-size="6.5" fill="#ffff00">S</text></g><rect x="213.5" y="844.5" width="21" height="23" fill="#191970" stroke="#8c8c8c" stroke-width="1"/><g transform="translate(213 844)" ><path d="M3.5 4V20M3 4.5H20M8.7 4V20M3 9.6H20M13.9 4V20M3 14.7H20M19.1 4V20M3 19.8H20" stroke="#ffff00" stroke-width="1.1" fill="none"/></g><rect x="236.5" y="821.5" width="20" height="46" fill="#191970" stroke="#8c8c8c" stroke-width="1"/><g transform="translate(236 821)" ><path d="M3 5L7 4L6 8L4 10ZM9 4L13 6L17 4L15 8L11 9ZM11 10L14 12L13 15L11 13ZM4 12L7 14L5 15Z" fill="#ffff00"/><text x="10.5" y="24.5" text-anchor="middle" font-family="Liberation Sans" font-weight="normal" font-size="9.5" fill="#ffff00">M</text><text x="10.5" y="32.7" text-anchor="middle" font-family="Liberation Sans" font-weight="normal" font-size="9.5" fill="#ffff00">A</text><text x="10.5" y="40.9" text-anchor="middle" font-family="Liberation Sans" font-weight="normal" font-size="9.5" fill="#ffff00">P</text></g><rect x="258.5" y="821.5" width="20" height="46" fill="#191970" stroke="#8c8c8c" stroke-width="1"/><g transform="translate(258 821)" ><clipPath id="cl258821"><rect x="3" y="2" width="15" height="43"/></clipPath><g clip-path="url(#cl258821)"><circle cx="10.5" cy="23.5" r="9.8" fill="none" stroke="#ffff00" stroke-width="1"/><circle cx="10.5" cy="23.5" r="6.5" fill="none" stroke="#ffff00" stroke-width="1"/><circle cx="10.5" cy="23.5" r="2.9" fill="none" stroke="#ffff00" stroke-width="1"/><path d="M13.4 23.5L20.3 23.5M12.6 25.6L17.4 30.4M10.5 26.4L10.5 33.3M8.4 25.6L3.6 30.4M7.6 23.5L0.7 23.5M8.4 21.4L3.6 16.6M10.5 20.6L10.5 13.7M12.6 21.4L17.4 16.6" stroke="#ffff00" stroke-width="1" fill="none"/></g></g><rect x="280.5" y="844.5" width="21" height="23" fill="#191970" stroke="#8c8c8c" stroke-width="1"/><g transform="translate(280 844)" ><circle cx="11" cy="12.5" r="6.5" fill="none" stroke="#ffff00" stroke-width="1.2"/></g><rect x="303.5" y="821.5" width="45" height="46" fill="#696969" stroke="#8c8c8c" stroke-width="1"/><g transform="translate(306 837)" ><path d="M5 18V8H9L11 16" fill="none" stroke="#e0e0e0" stroke-width="1"/><circle cx="21" cy="6.5" r="3.2" fill="none" stroke="#e0e0e0" stroke-width="1"/><path d="M20 10V16M22 10V16M33.5 0V16" stroke="#e0e0e0" stroke-width="1" fill="none"/><path d="M3 16H39L36 23M3 16C3 19 4 21 6 23" fill="none" stroke="#e0e0e0" stroke-width="1"/><path d="M0 27V22L2 23L4 21L6 23L9 21L12 23L15 21L18 23L21 21L24 23L27 21L30 23L33 21L36 23L39 21L40 22V27Z" fill="#e0e0e0"/></g></svg><div class="t " style="left:15px;top:429px;font-size:24px;transform:scaleY(1.06);transform-origin:0 80%"><span class="y" style="letter-spacing:-0.2px">21−aug−1997,04:05:00</span>&nbsp; <span>maxdz plot.&nbsp; maxdz plot.</span></div><div class="t ly" style="left:41px;top:458px;font-size:6px;">10</div><div class="t ly" style="left:264px;top:802px;font-size:6px;">-125</div><div class="t " style="left:231px;top:474px;font-size:5px;color:#e8a020">who-ind</div><div class="t " style="left:259px;top:627px;font-size:5px;color:#e8a020">b-c-125-5</div><div class="t " style="left:490px;top:457px;font-size:18px;">maxdz</div><div class="t " style="left:505px;top:478px;font-size:18px;">65.0</div><div class="t " style="left:505px;top:502px;font-size:18px;">50.0</div><div class="t " style="left:505px;top:526px;font-size:18px;">35.0</div><div class="t " style="left:505px;top:550px;font-size:18px;">20.0</div><div class="t " style="left:505px;top:574px;font-size:18px;">5.0</div><div class="t " style="left:505px;top:598px;font-size:18px;">−10.0</div><div class="t " style="left:490px;top:638px;font-size:18px;">maxdz</div><div class="t " style="left:505px;top:659px;font-size:18px;">65.0</div><div class="t " style="left:505px;top:683px;font-size:18px;">50.0</div><div class="t " style="left:505px;top:707px;font-size:18px;">35.0</div><div class="t " style="left:505px;top:731px;font-size:18px;">20.0</div><div class="t " style="left:505px;top:755px;font-size:18px;">5.0</div><div class="t " style="left:505px;top:779px;font-size:18px;">−10.0</div><div class="t " style="left:381px;top:840px;font-size:24px;">Alt: 0.50 km MSL</div></div></div>
<div class="a" style="left:4px;top:427px;width:1px;height:443px;background:repeating-linear-gradient(180deg,#fff 0 1px,transparent 1px 2px)"></div>
<div class="a" style="left:573px;top:386px;width:1px;height:386px;background:repeating-linear-gradient(180deg,#fff 0 1px,transparent 1px 2px)"></div>
<div class="w" style="left:0px;top:2px;width:572px;height:424px;background:#000;"><div class="pg" style="left:0px;top:-2px"><svg width="1280" height="1024" viewBox="0 0 1280 1024"><defs><pattern id="chkY" width="2" height="2" patternUnits="userSpaceOnUse"><rect width="1" height="1" fill="#ffff00"/><rect x="1" y="1" width="1" height="1" fill="#ffff00"/></pattern><pattern id="chkW" width="2" height="2" patternUnits="userSpaceOnUse"><rect width="1" height="1" fill="#e0e0e0"/><rect x="1" y="1" width="1" height="1" fill="#e0e0e0"/></pattern><pattern id="hatch" width="2" height="2" patternUnits="userSpaceOnUse"><rect width="2" height="2" fill="#fff8dc"/><rect width="1" height="1" fill="#444"/><rect x="1" y="1" width="1" height="1" fill="#444"/></pattern><pattern id="stip" width="2" height="2" patternUnits="userSpaceOnUse"><rect width="2" height="2" fill="#e6e6e6"/><rect width="1" height="1" fill="#222"/><rect x="1" y="1" width="1" height="1" fill="#222"/></pattern></defs><defs><filter id="cloud" x="0" y="0" width="100%" height="100%"><feTurbulence type="fractalNoise" baseFrequency="0.035 0.05" numOctaves="4" seed="7"/><feColorMatrix type="matrix" values="0 0 0 0 1  0 0 0 0 1  0 0 0 0 1  1.6 0 0 0 -0.55"/></filter><filter id="cloud2" x="0" y="0" width="100%" height="100%"><feTurbulence type="fractalNoise" baseFrequency="0.04 0.07" numOctaves="5" seed="23"/><feColorMatrix type="matrix" values="0 0 0 0 1  0 0 0 0 1  0 0 0 0 1  2.4 0 0 0 -0.85"/></filter><filter id="bl14"><feGaussianBlur stdDeviation="13"/></filter><mask id="cmask" maskUnits="userSpaceOnUse" x="50" y="34" width="436" height="314"><rect x="50" y="34" width="436" height="314" fill="#000"/><g fill="#fff" filter="url(#bl14)"><path d="M252 34L335 34L400 62L486 112L486 168L430 150L360 118L300 92L262 70Z"/><ellipse cx="425" cy="240" rx="85" ry="62"/><path d="M244 348L252 300L300 262L350 240L400 262L420 310L400 348Z"/><ellipse cx="330" cy="140" rx="28" ry="22"/><ellipse cx="262" cy="125" rx="22" ry="12"/></g></mask><clipPath id="satclip"><rect x="50" y="34" width="436" height="314"/></clipPath></defs><g clip-path="url(#satclip)"><rect x="50" y="34" width="436" height="314" fill="#7f7f7f"/><g filter="url(#bl14)" fill="#b6b6b6" opacity="0.8"><path d="M252 34L335 34L400 62L486 112L486 168L430 150L360 118L300 92L262 70Z"/><ellipse cx="425" cy="240" rx="85" ry="62"/><path d="M244 348L252 300L300 262L350 240L400 262L420 310L400 348Z"/><ellipse cx="330" cy="140" rx="28" ry="22"/><ellipse cx="262" cy="125" rx="22" ry="12"/></g><g filter="url(#bl14)" fill="#989898" opacity="0.55"><ellipse cx="135" cy="95" rx="45" ry="10" transform="rotate(-25 135 95)"/><ellipse cx="110" cy="170" rx="40" ry="25"/><ellipse cx="70" cy="300" rx="20" ry="40"/><ellipse cx="180" cy="230" rx="35" ry="15"/></g><rect x="50" y="34" width="436" height="314" filter="url(#cloud)" opacity="0.10"/><rect x="50" y="34" width="436" height="314" filter="url(#cloud2)" opacity="0.55" mask="url(#cmask)"/></g><defs><filter id="rag" x="-5%" y="-5%" width="110%" height="110%"><feTurbulence type="fractalNoise" baseFrequency="0.22" numOctaves="2" seed="3" result="n"/><feDisplacementMap in="SourceGraphic" in2="n" scale="9" xChannelSelector="R" yChannelSelector="G"/></filter></defs><g clip-path="url(#satclip)"><g shape-rendering="crispEdges" filter="url(#rag)"><ellipse cx="265" cy="38" rx="8" ry="6" fill="#0000ff" transform="rotate(0 265 38)"/><ellipse cx="265" cy="36" rx="4" ry="3" fill="#ff0000" transform="rotate(0 265 36)"/><path d="M306 68L311 66L318 74L326 70L330 72L335 70L334 76L330 82L336 88L330 86L322 84L316 82L309 76Z" fill="#0000ff"/><path d="M345 78L352 77L360 82L368 88L372 93L366 94L360 96L354 90L348 84Z" fill="#0000ff"/><path d="M336 90L344 92L345 97L340 96L337 99Z" fill="#0000ff"/><path d="M283 102L288 100L291 106L289 111L283 110Z" fill="#0000ff"/><path d="M278 131L285 130L286 133L281 135Z" fill="#0000ff"/><path d="M287 151L293 150L294 153L289 155Z" fill="#0000ff"/><path d="M198 137L201 140L202 148L200 152L203 154L199 159L195 162L190 164L187 162L189 158L193 156L196 152L198 146Z" fill="#0000ff"/><path d="M214 151L218 152L222 153L222 155L216 154Z" fill="#0000ff"/><ellipse cx="250" cy="159" rx="11" ry="13" fill="#0000ff" transform="rotate(0 250 159)"/><path d="M243 153L252 152L256 156L255 162L250 159L246 160Z" fill="#ff0000"/><ellipse cx="250" cy="156" rx="2" ry="1.5" fill="#ffa500" transform="rotate(0 250 156)"/><path d="M408 97L420 101L424 104L414 102Z" fill="#0000ff"/><path d="M428 103L440 107L444 110L434 108Z" fill="#0000ff"/><path d="M451 107L464 110L465 111L452 110Z" fill="#0000ff"/><path d="M384 103L392 107L396 110L388 108Z" fill="#0000ff"/><path d="M357 124L366 126L367 128L358 126Z" fill="#0000ff"/><path d="M402 123L412 121L424 125L427 131L424 137L412 136L404 133L410 129Z" fill="#0000ff"/><path d="M470 120L484 118L484 123L476 122Z" fill="#0000ff"/><path d="M393 148L402 145L404 150L412 148L415 156L408 160L404 166L396 162L398 155L392 153Z" fill="#0000ff"/><path d="M386 160L392 158L400 160L410 162L418 165L424 160L430 156L440 154L452 154L462 152L470 156L474 162L480 166L485 170L485 186L478 190L470 192L462 196L456 200L448 196L440 190L432 192L424 194L418 190L412 186L404 184L396 180L388 176L385 168Z" fill="#0000ff"/><path d="M389 163L398 162L406 163L408 168L406 172L398 171L390 170Z" fill="#ff0000"/><path d="M391 164L404 164L405 169L392 169Z" fill="#ffa500"/><path d="M428 162L436 158L444 158L452 157L458 160L466 164L468 172L466 182L462 188L452 188L444 184L438 178L432 174L428 168Z" fill="#ff0000"/><path d="M444 170L450 167L458 168L462 174L462 182L456 185L448 182L444 176Z" fill="#ffa500"/><path d="M434 160L442 160L444 164L436 165Z" fill="#ffa500"/><path d="M430 168L438 169L440 174L432 173Z" fill="#ffa500"/><ellipse cx="452" cy="172" rx="4" ry="3" fill="#ffc0cb" transform="rotate(0 452 172)"/><path d="M450 195L456 197L458 201L452 200Z" fill="#ff0000"/><path d="M379 182L392 186L404 192L414 198L410 198L398 193L386 188Z" fill="#0000ff"/><path d="M390 175L402 180L412 186L408 187L396 182Z" fill="#0000ff"/><path d="M432 196L440 202L446 208L440 206L434 201Z" fill="#0000ff"/><path d="M462 196L470 198L472 202L466 201Z" fill="#0000ff"/><path d="M352 187L362 187L362 189L352 189Z" fill="#0000ff"/><path d="M360 204L368 204L368 206L360 206Z" fill="#0000ff"/><path d="M422 220L432 218L440 217L448 216L454 219L460 222L461 230L458 236L452 240L446 238L440 243L436 248L432 244L434 238L428 232L424 226Z" fill="#0000ff"/><path d="M442 250L448 246L454 248L458 244L462 240L466 236L470 238L474 242L480 240L485 236L485 262L480 258L476 262L472 266L468 262L464 258L460 264L456 272L452 280L448 278L446 268L444 260Z" fill="#0000ff"/><path d="M443 249L452 244L461 247L464 258L463 268L456 276L447 280L444 266Z" fill="#0000ff"/><path d="M464 240L472 236L485 234L485 268L478 264L472 270L466 262Z" fill="#0000ff"/><path d="M346 230L352 227L360 228L368 230L372 226L377 227L374 232L368 236L360 234L352 232Z" fill="#0000ff"/><path d="M385 240L390 239L393 246L392 252L386 251Z" fill="#0000ff"/><path d="M404 248L408 250L412 248L416 252L414 262L410 268L406 262Z" fill="#0000ff"/><path d="M418 252L422 252L423 262L420 264Z" fill="#0000ff"/><path d="M345 256L352 251L353 254L348 259Z" fill="#0000ff"/><path d="M330 263L340 261L340 263L331 265Z" fill="#0000ff"/><path d="M335 273L348 272L360 273L368 274L375 278L372 280L364 278L360 282L356 286L348 288L340 290L339 286L346 283L352 280L344 278L336 277Z" fill="#0000ff"/><path d="M324 286L332 284L334 287L326 289Z" fill="#0000ff"/><path d="M277 237L283 235L284 239L278 241Z" fill="#0000ff"/><path d="M291 236L296 233L297 237L292 238Z" fill="#0000ff"/><path d="M455 290L457 290L456 302L454 302Z" fill="#0000ff"/><path d="M468 35L476 34L480 36L479 43L474 40L470 42Z" fill="#0000ff"/><rect x="130" y="174" width="2" height="2" fill="#0000ff"/><rect x="59" y="174" width="2" height="2" fill="#0000ff"/><rect x="314" y="52" width="2" height="2" fill="#0000ff"/><rect x="322" y="60" width="2" height="2" fill="#0000ff"/><rect x="257" y="100" width="2" height="2" fill="#0000ff"/><rect x="260" y="104" width="2" height="2" fill="#0000ff"/><rect x="439" y="120" width="2" height="2" fill="#0000ff"/><rect x="382" y="137" width="2" height="2" fill="#0000ff"/><rect x="396" y="140" width="2" height="2" fill="#0000ff"/><rect x="420" y="150" width="2" height="2" fill="#0000ff"/><rect x="430" y="214" width="2" height="2" fill="#0000ff"/><rect x="396" y="212" width="2" height="2" fill="#0000ff"/><rect x="382" y="236" width="2" height="2" fill="#0000ff"/><rect x="404" y="232" width="2" height="2" fill="#0000ff"/><rect x="398" y="226" width="2" height="2" fill="#0000ff"/><rect x="288" y="261" width="2" height="2" fill="#0000ff"/><rect x="296" y="266" width="2" height="2" fill="#0000ff"/><rect x="252" y="284" width="2" height="2" fill="#0000ff"/><rect x="318" y="273" width="2" height="2" fill="#0000ff"/><rect x="322" y="303" width="2" height="2" fill="#0000ff"/><rect x="330" y="312" width="2" height="2" fill="#0000ff"/><rect x="334" y="304" width="2" height="2" fill="#0000ff"/><rect x="342" y="302" width="2" height="2" fill="#0000ff"/><rect x="451" y="308" width="2" height="2" fill="#0000ff"/><rect x="400" y="283" width="2" height="2" fill="#0000ff"/><rect x="420" y="210" width="2" height="2" fill="#0000ff"/><rect x="264" y="68" width="2" height="2" fill="#0000ff"/><rect x="371" y="230" width="2" height="2" fill="#0000ff"/><rect x="388" y="126" width="2" height="2" fill="#0000ff"/><rect x="438" y="132" width="2" height="2" fill="#0000ff"/><rect x="246" y="187" width="2" height="2" fill="#00e890"/><rect x="248" y="190" width="2" height="2" fill="#00e890"/><rect x="253" y="185" width="2" height="2" fill="#00e890"/><rect x="225" y="201" width="2" height="2" fill="#00e890"/><rect x="260" y="222" width="2" height="2" fill="#00e890"/><rect x="262" y="224" width="2" height="2" fill="#00e890"/><rect x="248" y="238" width="2" height="2" fill="#00e890"/><rect x="244" y="240" width="2" height="2" fill="#00e890"/><rect x="250" y="242" width="2" height="2" fill="#00e890"/><rect x="243" y="244" width="2" height="2" fill="#00e890"/><rect x="240" y="248" width="2" height="2" fill="#00e890"/><rect x="252" y="240" width="2" height="2" fill="#90ee90"/><rect x="236" y="236" width="2" height="2" fill="#000"/><rect x="248" y="194" width="2" height="2" fill="#000"/><rect x="257" y="202" width="2" height="2" fill="#000"/><rect x="268" y="222" width="2" height="2" fill="#000"/><rect x="229" y="244" width="2" height="2" fill="#000"/><rect x="463" y="74" width="1" height="1" fill="#ffff00"/></g></g><path d="M78 102.5H89M83.5 97V108" stroke="#f0e68c" stroke-width="1" fill="none" shape-rendering="crispEdges"/><path d="M78 183.5H89M83.5 178V189" stroke="#f0e68c" stroke-width="1" fill="none" shape-rendering="crispEdges"/><path d="M78 265.5H89M83.5 260V271" stroke="#f0e68c" stroke-width="1" fill="none" shape-rendering="crispEdges"/><path d="M78 347.5H89M83.5 342V353" stroke="#f0e68c" stroke-width="1" fill="none" shape-rendering="crispEdges"/><path d="M158 102.5H169M163.5 97V108" stroke="#f0e68c" stroke-width="1" fill="none" shape-rendering="crispEdges"/><path d="M158 183.5H169M163.5 178V189" stroke="#f0e68c" stroke-width="1" fill="none" shape-rendering="crispEdges"/><path d="M158 265.5H169M163.5 260V271" stroke="#f0e68c" stroke-width="1" fill="none" shape-rendering="crispEdges"/><path d="M158 347.5H169M163.5 342V353" stroke="#f0e68c" stroke-width="1" fill="none" shape-rendering="crispEdges"/><path d="M238 102.5H249M243.5 97V108" stroke="#f0e68c" stroke-width="1" fill="none" shape-rendering="crispEdges"/><path d="M238 183.5H249M243.5 178V189" stroke="#f0e68c" stroke-width="1" fill="none" shape-rendering="crispEdges"/><path d="M238 265.5H249M243.5 260V271" stroke="#f0e68c" stroke-width="1" fill="none" shape-rendering="crispEdges"/><path d="M238 347.5H249M243.5 342V353" stroke="#f0e68c" stroke-width="1" fill="none" shape-rendering="crispEdges"/><path d="M319 102.5H330M324.5 97V108" stroke="#f0e68c" stroke-width="1" fill="none" shape-rendering="crispEdges"/><path d="M319 183.5H330M324.5 178V189" stroke="#f0e68c" stroke-width="1" fill="none" shape-rendering="crispEdges"/><path d="M319 265.5H330M324.5 260V271" stroke="#f0e68c" stroke-width="1" fill="none" shape-rendering="crispEdges"/><path d="M319 347.5H330M324.5 342V353" stroke="#f0e68c" stroke-width="1" fill="none" shape-rendering="crispEdges"/><path d="M399 102.5H410M404.5 97V108" stroke="#f0e68c" stroke-width="1" fill="none" shape-rendering="crispEdges"/><path d="M399 183.5H410M404.5 178V189" stroke="#f0e68c" stroke-width="1" fill="none" shape-rendering="crispEdges"/><path d="M399 265.5H410M404.5 260V271" stroke="#f0e68c" stroke-width="1" fill="none" shape-rendering="crispEdges"/><path d="M399 347.5H410M404.5 342V353" stroke="#f0e68c" stroke-width="1" fill="none" shape-rendering="crispEdges"/><path d="M479 102.5H490M484.5 97V108" stroke="#f0e68c" stroke-width="1" fill="none" shape-rendering="crispEdges"/><path d="M479 183.5H490M484.5 178V189" stroke="#f0e68c" stroke-width="1" fill="none" shape-rendering="crispEdges"/><path d="M479 265.5H490M484.5 260V271" stroke="#f0e68c" stroke-width="1" fill="none" shape-rendering="crispEdges"/><path d="M479 347.5H490M484.5 342V353" stroke="#f0e68c" stroke-width="1" fill="none" shape-rendering="crispEdges"/><g shape-rendering="crispEdges"><rect x="237.0" y="177" width="1" height="1" fill="#ff00ff"/><rect x="235.0" y="178" width="5" height="5" fill="#ff00ff"/><rect x="236.0" y="179" width="1" height="3" fill="#9a6a9a"/><rect x="238.0" y="179" width="1" height="3" fill="#9a6a9a"/><rect x="234.0" y="183" width="7" height="2" fill="#ff00ff"/><rect x="237.0" y="185" width="1" height="2" fill="#ff00ff"/></g><path d="M233.5 187H241.5L243.5 190H231.5Z" fill="#ff00ff"/><path d="M229.5 188.5L231.0 190.5L232.5 189.5L234.0 190.5L235.5 189.5L237.0 190.5L238.5 189.5L240.0 190.5L241.5 189.5L243.0 190.5L245.5 188.5" fill="none" stroke="#ff00ff" stroke-width="1.2"/><g shape-rendering="crispEdges"><rect x="243.0" y="209" width="1" height="1" fill="#ff00ff"/><rect x="241.0" y="210" width="5" height="5" fill="#ff00ff"/><rect x="242.0" y="211" width="1" height="3" fill="#9a6a9a"/><rect x="244.0" y="211" width="1" height="3" fill="#9a6a9a"/><rect x="240.0" y="215" width="7" height="2" fill="#ff00ff"/><rect x="243.0" y="217" width="1" height="2" fill="#ff00ff"/></g><path d="M239.5 219H247.5L249.5 222H237.5Z" fill="#ff00ff"/><path d="M235.5 220.5L237.0 222.5L238.5 221.5L240.0 222.5L241.5 221.5L243.0 222.5L244.5 221.5L246.0 222.5L247.5 221.5L249.0 222.5L251.5 220.5" fill="none" stroke="#ff00ff" stroke-width="1.2"/><g shape-rendering="crispEdges"><rect x="243.0" y="258" width="1" height="1" fill="#ff00ff"/><rect x="241.0" y="259" width="5" height="5" fill="#ff00ff"/><rect x="242.0" y="260" width="1" height="3" fill="#9a6a9a"/><rect x="244.0" y="260" width="1" height="3" fill="#9a6a9a"/><rect x="240.0" y="264" width="7" height="2" fill="#ff00ff"/><rect x="243.0" y="266" width="1" height="2" fill="#ff00ff"/></g><path d="M239.5 268H247.5L249.5 271H237.5Z" fill="#ff00ff"/><path d="M235.5 269.5L237.0 271.5L238.5 270.5L240.0 271.5L241.5 270.5L243.0 271.5L244.5 270.5L246.0 271.5L247.5 270.5L249.0 271.5L251.5 269.5" fill="none" stroke="#ff00ff" stroke-width="1.2"/><g shape-rendering="crispEdges"><rect x="243.0" y="307" width="1" height="1" fill="#ff00ff"/><rect x="241.0" y="308" width="5" height="5" fill="#ff00ff"/><rect x="242.0" y="309" width="1" height="3" fill="#9a6a9a"/><rect x="244.0" y="309" width="1" height="3" fill="#9a6a9a"/><rect x="240.0" y="313" width="7" height="2" fill="#ff00ff"/><rect x="243.0" y="315" width="1" height="2" fill="#ff00ff"/></g><path d="M239.5 317H247.5L249.5 320H237.5Z" fill="#ff00ff"/><path d="M235.5 318.5L237.0 320.5L238.5 319.5L240.0 320.5L241.5 319.5L243.0 320.5L244.5 319.5L246.0 320.5L247.5 319.5L249.0 320.5L251.5 318.5" fill="none" stroke="#ff00ff" stroke-width="1.2"/><g shape-rendering="crispEdges"><rect x="243.0" y="340" width="1" height="1" fill="#ff00ff"/><rect x="241.0" y="341" width="5" height="5" fill="#ff00ff"/><rect x="242.0" y="342" width="1" height="3" fill="#9a6a9a"/><rect x="244.0" y="342" width="1" height="3" fill="#9a6a9a"/><rect x="240.0" y="346" width="7" height="2" fill="#ff00ff"/><rect x="243.0" y="348" width="1" height="2" fill="#ff00ff"/></g><path d="M239.5 350H247.5L249.5 353H237.5Z" fill="#ff00ff"/><path d="M235.5 351.5L237.0 353.5L238.5 352.5L240.0 353.5L241.5 352.5L243.0 353.5L244.5 352.5L246.0 353.5L247.5 352.5L249.0 353.5L251.5 351.5" fill="none" stroke="#ff00ff" stroke-width="1.2"/><g shape-rendering="crispEdges"><rect x="484.0" y="209" width="1" height="1" fill="#ff00ff"/><rect x="482.0" y="210" width="5" height="5" fill="#ff00ff"/><rect x="483.0" y="211" width="1" height="3" fill="#9a6a9a"/><rect x="485.0" y="211" width="1" height="3" fill="#9a6a9a"/><rect x="481.0" y="215" width="7" height="2" fill="#ff00ff"/><rect x="484.0" y="217" width="1" height="2" fill="#ff00ff"/></g><path d="M480.5 219H488.5L490.5 222H478.5Z" fill="#ff00ff"/><path d="M476.5 220.5L478.0 222.5L479.5 221.5L481.0 222.5L482.5 221.5L484.0 222.5L485.5 221.5L487.0 222.5L488.5 221.5L490.0 222.5L492.5 220.5" fill="none" stroke="#ff00ff" stroke-width="1.2"/><g shape-rendering="crispEdges"><rect x="484.0" y="258" width="1" height="1" fill="#ff00ff"/><rect x="482.0" y="259" width="5" height="5" fill="#ff00ff"/><rect x="483.0" y="260" width="1" height="3" fill="#9a6a9a"/><rect x="485.0" y="260" width="1" height="3" fill="#9a6a9a"/><rect x="481.0" y="264" width="7" height="2" fill="#ff00ff"/><rect x="484.0" y="266" width="1" height="2" fill="#ff00ff"/></g><path d="M480.5 268H488.5L490.5 271H478.5Z" fill="#ff00ff"/><path d="M476.5 269.5L478.0 271.5L479.5 270.5L481.0 271.5L482.5 270.5L484.0 271.5L485.5 270.5L487.0 271.5L488.5 270.5L490.0 271.5L492.5 269.5" fill="none" stroke="#ff00ff" stroke-width="1.2"/><g shape-rendering="crispEdges"><rect x="484.0" y="307" width="1" height="1" fill="#ff00ff"/><rect x="482.0" y="308" width="5" height="5" fill="#ff00ff"/><rect x="483.0" y="309" width="1" height="3" fill="#9a6a9a"/><rect x="485.0" y="309" width="1" height="3" fill="#9a6a9a"/><rect x="481.0" y="313" width="7" height="2" fill="#ff00ff"/><rect x="484.0" y="315" width="1" height="2" fill="#ff00ff"/></g><path d="M480.5 317H488.5L490.5 320H478.5Z" fill="#ff00ff"/><path d="M476.5 318.5L478.0 320.5L479.5 319.5L481.0 320.5L482.5 319.5L484.0 320.5L485.5 319.5L487.0 320.5L488.5 319.5L490.0 320.5L492.5 318.5" fill="none" stroke="#ff00ff" stroke-width="1.2"/><g shape-rendering="crispEdges"><rect x="484.0" y="340" width="1" height="1" fill="#ff00ff"/><rect x="482.0" y="341" width="5" height="5" fill="#ff00ff"/><rect x="483.0" y="342" width="1" height="3" fill="#9a6a9a"/><rect x="485.0" y="342" width="1" height="3" fill="#9a6a9a"/><rect x="481.0" y="346" width="7" height="2" fill="#ff00ff"/><rect x="484.0" y="348" width="1" height="2" fill="#ff00ff"/></g><path d="M480.5 350H488.5L490.5 353H478.5Z" fill="#ff00ff"/><path d="M476.5 351.5L478.0 353.5L479.5 352.5L481.0 353.5L482.5 352.5L484.0 353.5L485.5 352.5L487.0 353.5L488.5 352.5L490.0 353.5L492.5 351.5" fill="none" stroke="#ff00ff" stroke-width="1.2"/><path d="M487 34.5H571M487 237.5H571M487 375.5H571" stroke="#a0a0a0" stroke-width="1" fill="none" shape-rendering="crispEdges"/><defs><linearGradient id="irg" x1="0" y1="0" x2="0" y2="1"><stop offset="0" stop-color="#000"/><stop offset="1" stop-color="#d0d0d0"/></linearGradient></defs><rect x="489" y="60" width="10" height="96" fill="url(#irg)"/><rect x="489" y="156" width="10" height="16" fill="#0000ff"/><rect x="489" y="172" width="10" height="4" fill="#ff0000"/><rect x="489" y="176" width="10" height="4" fill="#ffa500"/><rect x="489" y="180" width="10" height="4" fill="#ffc0cb"/><rect x="489" y="184" width="10" height="4" fill="#ffff00"/><rect x="489" y="263" width="10" height="28" fill="#b22222"/><rect x="489" y="291" width="10" height="28" fill="#ffa07a"/><rect x="489" y="319" width="10" height="28" fill="#f8f580"/><rect x="489" y="347" width="10" height="28" fill="#00e890"/></svg><div class="t " style="left:10px;top:6px;font-size:24px;transform:scaleY(1.06);transform-origin:0 80%"><span class="y" style="letter-spacing:-0.2px">21−aug−1997,04:05:00</span>&nbsp; <span style="letter-spacing:0.14px">ir plot.&nbsp; Rhb_lowprf maxdz</span></div><div class="t " style="left:10px;top:35px;font-size:24px;letter-spacing:0.2px;transform:scaleY(1.06);transform-origin:0 80%">filled contour.</div><div class="t ly" style="left:0px;top:87px;font-size:17px;width:34px;text-align:right">15</div><div class="t ly" style="left:0px;top:169px;font-size:17px;width:34px;text-align:right">10</div><div class="t ly" style="left:0px;top:250px;font-size:17px;width:34px;text-align:right">5</div><div class="t ly" style="left:0px;top:331px;font-size:17px;width:34px;text-align:right">0</div><div class="t ly" style="left:45px;top:358px;font-size:18px;width:70px;text-align:center">−135</div><div class="t ly" style="left:125px;top:358px;font-size:18px;width:70px;text-align:center">−130</div><div class="t ly" style="left:205px;top:358px;font-size:18px;width:70px;text-align:center">−125</div><div class="t ly" style="left:286px;top:358px;font-size:18px;width:70px;text-align:center">−120</div><div class="t ly" style="left:366px;top:358px;font-size:18px;width:70px;text-align:center">−115</div><div class="t ly" style="left:446px;top:358px;font-size:18px;width:70px;text-align:center">−110</div><div class="a" style="left:500px;top:350px;width:72px;height:25px;background:#000;"></div><div class="a" style="left:489px;top:347px;width:10px;height:28px;background:#00e890;"></div><div class="t " style="left:489px;top:32px;font-size:18px;">ir</div><div class="t " style="left:504px;top:54.0px;font-size:17.5px;">387.0</div><div class="t " style="left:504px;top:76.4px;font-size:17.5px;">351.0</div><div class="t " style="left:504px;top:98.8px;font-size:17.5px;">315.0</div><div class="t " style="left:504px;top:121.19999999999999px;font-size:17.5px;">279.0</div><div class="t " style="left:504px;top:143.6px;font-size:17.5px;">243.0</div><div class="t " style="left:504px;top:166.0px;font-size:17.5px;">207.0</div><div class="t " style="left:488px;top:243px;font-size:18px;">maxdz</div><div class="t " style="left:504px;top:271px;font-size:17.5px;">55.0</div><div class="t " style="left:504px;top:299px;font-size:17.5px;">45.0</div><div class="t " style="left:504px;top:327px;font-size:17.5px;">35.0</div><div class="t " style="left:504px;top:355px;font-size:17.5px;">25.0</div><svg width="1280" height="1024" viewBox="0 0 1280 1024"><rect x="5.5" y="377.5" width="45" height="46" fill="#191970" stroke="#8c8c8c" stroke-width="1"/><g transform="translate(5 377)" ><path d="M6.7 11.5C9 7.5 14 6 19 8S30 12 38 8.5L6 39.5C10 36 15 34.5 21 36.5S33 41.5 38.7 35" fill="none" stroke="#ffff00" stroke-width="1.4" stroke-linejoin="round" stroke-linecap="round"/><path d="M38 8.5L6 39.5L9 39L36.5 12Z" fill="#ffff00"/></g><rect x="52.5" y="377.5" width="45" height="46" fill="#191970" stroke="#8c8c8c" stroke-width="1"/><g transform="translate(52 377)" ><text x="2.5" y="14.3" font-family="Liberation Sans" font-weight="bold" font-size="15" fill="#ffff00" textLength="30" lengthAdjust="spacingAndGlyphs">GOES</text><path d="M3 18C12 17 20 24 22 34C22 38 21 42 20 44L3 44Z" fill="url(#chkY)"/><path d="M14 25L18 26L21 31L20 36L15 35L12 30Z" fill="#ffff00"/><path d="M3 40L5 37L10 37L11 44L3 44Z" fill="#ffff00"/><path d="M40 20L42.5 23L40 26L37.5 23Z" fill="#ffff00"/><path d="M22 27L38 24M22 35L38 25" stroke="#ffff00" stroke-width="1" stroke-dasharray="1 1.6" fill="none"/><rect x="18" y="18" width="1" height="1" fill="#ffff00"/><rect x="24" y="22" width="1" height="1" fill="#ffff00"/><rect x="27" y="21" width="1" height="1" fill="#ffff00"/><rect x="30" y="20" width="1" height="1" fill="#ffff00"/><rect x="41" y="30" width="1" height="1" fill="#ffff00"/><rect x="38" y="33" width="1" height="1" fill="#ffff00"/><rect x="35" y="30" width="1" height="1" fill="#ffff00"/><text x="26" y="43" font-family="Liberation Sans" font-size="9" fill="#ffff00" textLength="14" lengthAdjust="spacingAndGlyphs">.IR</text></g><rect x="99.5" y="377.5" width="45" height="46" fill="#191970" stroke="#8c8c8c" stroke-width="1"/><g transform="translate(99 377)" ><g transform="translate(5 9)" ><path d="M0 0C2 10 9 19 22.5 21.5" fill="none" stroke="#ffff00" stroke-width="1.8" stroke-linecap="round"/><path d="M7 11.5L11.5 10.5L11.5 17" fill="none" stroke="#ffff00" stroke-width="1"/><path d="M6.5 14L10 14L10.5 30L3.5 30L4.5 24Z" fill="#ffff00"/></g><text x="32.25" y="16.0" font-family="Liberation Sans" font-weight="normal" font-size="13.5" fill="#ffff00" textLength="6.5" lengthAdjust="spacingAndGlyphs">S</text><text x="32.25" y="27.7" font-family="Liberation Sans" font-weight="normal" font-size="13.5" fill="#ffff00" textLength="6.5" lengthAdjust="spacingAndGlyphs">U</text><text x="32.25" y="39.4" font-family="Liberation Sans" font-weight="normal" font-size="13.5" fill="#ffff00" textLength="6.5" lengthAdjust="spacingAndGlyphs">R</text></g><rect x="146.5" y="377.5" width="45" height="46" fill="#696969" stroke="#8c8c8c" stroke-width="1"/><g transform="translate(146 377)" ><path d="M5.5 5V42M14.5 5V42M23.5 5V42M32.5 5V42M41.5 5V42M5 5.5H42M5 14.6H42M5 23.7H42M5 32.8H42M5 41.9H42" stroke="#e0e0e0" stroke-width="1.2" fill="none"/><g transform="translate(12 9)" ><path d="M0 0C2 10 9 19 22.5 21.5" fill="none" stroke="#e0e0e0" stroke-width="1.8" stroke-linecap="round"/><path d="M7 11.5L11.5 10.5L11.5 17" fill="none" stroke="#e0e0e0" stroke-width="1"/><path d="M6.5 14L10 14L10.5 30L3.5 30L4.5 24Z" fill="#e0e0e0"/></g></g><rect x="193.5" y="377.5" width="13" height="46" fill="#696969" stroke="#8c8c8c" stroke-width="1"/><g transform="translate(193 377)" ><text x="7" y="10.5" text-anchor="middle" font-family="Liberation Sans" font-weight="bold" font-size="6.5" fill="#e8e8e8">B</text><text x="7" y="16.4" text-anchor="middle" font-family="Liberation Sans" font-weight="bold" font-size="6.5" fill="#e8e8e8">O</text><text x="7" y="22.3" text-anchor="middle" font-family="Liberation Sans" font-weight="bold" font-size="6.5" fill="#e8e8e8">U</text><text x="7" y="28.200000000000003" text-anchor="middle" font-family="Liberation Sans" font-weight="bold" font-size="6.5" fill="#e8e8e8">N</text><text x="7" y="34.1" text-anchor="middle" font-family="Liberation Sans" font-weight="bold" font-size="6.5" fill="#e8e8e8">D</text><text x="7" y="40.0" text-anchor="middle" font-family="Liberation Sans" font-weight="bold" font-size="6.5" fill="#e8e8e8">S</text></g><rect x="208.5" y="400.5" width="21" height="23" fill="#191970" stroke="#8c8c8c" stroke-width="1"/><g transform="translate(208 400)" ><path d="M3.5 4V20M3 4.5H20M8.7 4V20M3 9.6H20M13.9 4V20M3 14.7H20M19.1 4V20M3 19.8H20" stroke="#ffff00" stroke-width="1.1" fill="none"/></g><rect x="231.5" y="377.5" width="20" height="46" fill="#191970" stroke="#8c8c8c" stroke-width="1"/><g transform="translate(231 377)" ><path d="M3 5L7 4L6 8L4 10ZM9 4L13 6L17 4L15 8L11 9ZM11 10L14 12L13 15L11 13ZM4 12L7 14L5 15Z" fill="#ffff00"/><text x="10.5" y="24.5" text-anchor="middle" font-family="Liberation Sans" font-weight="normal" font-size="9.5" fill="#ffff00">M</text><text x="10.5" y="32.7" text-anchor="middle" font-family="Liberation Sans" font-weight="normal" font-size="9.5" fill="#ffff00">A</text><text x="10.5" y="40.9" text-anchor="middle" font-family="Liberation Sans" font-weight="normal" font-size="9.5" fill="#ffff00">P</text></g><rect x="253.5" y="377.5" width="20" height="46" fill="#696969" stroke="#8c8c8c" stroke-width="1"/><g transform="translate(253 377)" ><clipPath id="cl253377"><rect x="3" y="2" width="15" height="43"/></clipPath><g clip-path="url(#cl253377)"><circle cx="10.5" cy="23.5" r="9.8" fill="none" stroke="#e0e0e0" stroke-width="1"/><circle cx="10.5" cy="23.5" r="6.5" fill="none" stroke="#e0e0e0" stroke-width="1"/><circle cx="10.5" cy="23.5" r="2.9" fill="none" stroke="#e0e0e0" stroke-width="1"/><path d="M13.4 23.5L20.3 23.5M12.6 25.6L17.4 30.4M10.5 26.4L10.5 33.3M8.4 25.6L3.6 30.4M7.6 23.5L0.7 23.5M8.4 21.4L3.6 16.6M10.5 20.6L10.5 13.7M12.6 21.4L17.4 16.6" stroke="#e0e0e0" stroke-width="1" fill="none"/></g></g><rect x="275.5" y="400.5" width="21" height="23" fill="#191970" stroke="#8c8c8c" stroke-width="1"/><g transform="translate(276 402)" ><path d="M9 3H11V5H12V11H13L14 14H6L7 11H8V5H9Z" fill="#ffff00"/><path d="M2 14C4 17 5 17 6.5 15C8 17 9 17 10 15C11 17 12 17 13.5 15C15 17 16 17 18 14" fill="none" stroke="#ffff00" stroke-width="1"/></g><rect x="298.5" y="377.5" width="45" height="46" fill="#696969" stroke="#8c8c8c" stroke-width="1"/><g transform="translate(301 393)" ><path d="M5 18V8H9L11 16" fill="none" stroke="#e0e0e0" stroke-width="1"/><circle cx="21" cy="6.5" r="3.2" fill="none" stroke="#e0e0e0" stroke-width="1"/><path d="M20 10V16M22 10V16M33.5 0V16" stroke="#e0e0e0" stroke-width="1" fill="none"/><path d="M3 16H39L36 23M3 16C3 19 4 21 6 23" fill="none" stroke="#e0e0e0" stroke-width="1"/><path d="M0 27V22L2 23L4 21L6 23L9 21L12 23L15 21L18 23L21 21L24 23L27 21L30 23L33 21L36 23L39 21L40 22V27Z" fill="#e0e0e0"/></g></svg></div></div>
<div class="a" style="left:4px;top:426px;width:570px;height:1px;background:#000;"></div>
<div class="a" style="left:572px;top:386px;width:2px;height:41px;background:#000;"></div>
<div class="a" style="left:4px;top:426px;width:569px;height:1px;background:repeating-linear-gradient(90deg,#fff 0 1px,transparent 1px 2px)"></div>
<div class="a" style="left:571px;top:2px;width:1px;height:385px;background:repeating-linear-gradient(180deg,#fff 0 1px,transparent 1px 2px)"></div>
<div class="w" style="left:572px;top:2px;width:561px;height:384px;background:#000;"><div class="pg" style="left:-572px;top:-2px"><svg width="1280" height="1024" viewBox="0 0 1280 1024"><g shape-rendering="crispEdges"><rect x="760" y="276" width="289" height="23" fill="#00e890"/><rect x="760" y="276" width="50" height="23" fill="#00b0e0"/><path d="M760 276L765 276L760 284Z" fill="#1860e0"/><rect x="841" y="265" width="130" height="11" fill="#00e890"/><path d="M841 265L861 265L841 276Z" fill="#00b0e0"/><path d="M937 265L971 265L971 270L952 267Z" fill="#00b0e0"/><path d="M871 299L875 277L890 272L905 271L920 272L931 277L934 299Z" fill="#087048"/><path d="M996 276L1005 276L1003 299L999 299Z" fill="#00b0e0"/><rect x="1026" y="265" width="23" height="11" fill="#00e890"/><path d="M1026 265L1049 265L1049 272L1032 271L1026 274Z" fill="#00b0e0"/></g><path d="M622.5 30.5V311.5H1048.5V30.5H622.5M622.5 311.5H633.5M1048.5 311.5H1037.5M622.5 283.5H633.5M1048.5 283.5H1037.5M622.5 255.5H633.5M1048.5 255.5H1037.5M622.5 227.5H633.5M1048.5 227.5H1037.5M622.5 198.5H633.5M1048.5 198.5H1037.5M622.5 170.5H633.5M1048.5 170.5H1037.5M622.5 142.5H633.5M1048.5 142.5H1037.5M622.5 114.5H633.5M1048.5 114.5H1037.5M622.5 86.5H633.5M1048.5 86.5H1037.5M622.5 58.5H633.5M1048.5 58.5H1037.5M622.5 30.5H633.5M1048.5 30.5H1037.5M622.5 311.5V304.5M622.5 30.5V37.5M675.5 311.5V304.5M675.5 30.5V37.5M728.5 311.5V304.5M728.5 30.5V37.5M782.5 311.5V304.5M782.5 30.5V37.5M835.5 311.5V304.5M835.5 30.5V37.5M888.5 311.5V304.5M888.5 30.5V37.5M942.5 311.5V304.5M942.5 30.5V37.5M995.5 311.5V304.5M995.5 30.5V37.5M1048.5 311.5V304.5M1048.5 30.5V37.5" stroke="#fff" stroke-width="1" fill="none" shape-rendering="crispEdges"/><path d="M1049 28.5H1132M1049 335.5H1132" stroke="#a0a0a0" stroke-width="1" fill="none" shape-rendering="crispEdges"/><rect x="1050" y="52" width="10" height="17" fill="#fa8080"/><rect x="1050" y="69" width="10" height="17" fill="#ff9494"/><rect x="1050" y="86" width="10" height="17" fill="#fbb067"/><rect x="1050" y="103" width="10" height="17" fill="#fdd5ac"/><rect x="1050" y="120" width="10" height="17" fill="#fada1a"/><rect x="1050" y="137" width="10" height="17" fill="#efb820"/><rect x="1050" y="154" width="10" height="17" fill="#da9030"/><rect x="1050" y="171" width="10" height="17" fill="#c4c4c4"/><rect x="1050" y="188" width="10" height="17" fill="#086848"/><rect x="1050" y="205" width="10" height="17" fill="#00e898"/><rect x="1050" y="222" width="10" height="17" fill="#00b0e0"/><rect x="1050" y="239" width="10" height="17" fill="#0070e0"/><rect x="1050" y="256" width="10" height="17" fill="#1840e0"/><rect x="1050" y="273" width="10" height="17" fill="#4020e0"/><rect x="1050" y="290" width="10" height="17" fill="#6808e8"/><rect x="1050" y="307" width="10" height="17" fill="#9010f8"/><rect x="577.5" y="336.5" width="45" height="47" fill="#191970" stroke="#8c8c8c" stroke-width="1"/><g transform="translate(577 336)" ><path d="M6.7 11.5C9 7.5 14 6 19 8S30 12 38 8.5L6 39.5C10 36 15 34.5 21 36.5S33 41.5 38.7 35" fill="none" stroke="#ffff00" stroke-width="1.4" stroke-linejoin="round" stroke-linecap="round"/><path d="M38 8.5L6 39.5L9 39L36.5 12Z" fill="#ffff00"/></g><rect x="624.5" y="336.5" width="45" height="47" fill="#191970" stroke="#8c8c8c" stroke-width="1"/><g transform="translate(624 336)" ><text x="23" y="9" text-anchor="middle" font-family="Liberation Sans" font-weight="bold" font-size="6.5" fill="#ffff00" textLength="24" lengthAdjust="spacingAndGlyphs">CROSS</text><path d="M13 12L34 11L34 32L13 33Z" fill="url(#chkY)"/><path d="M4.5 17.5H26.5V37.5H4.5ZM19.5 11.5H40.5V31.5H19.5V11.5M4.5 17.5L19.5 11.5M26.5 17.5L40.5 11.5M26.5 37.5L40.5 31.5M4.5 37.5L19.5 31.5" fill="none" stroke="#ffff00" stroke-width="1"/><text x="23" y="45" text-anchor="middle" font-family="Liberation Sans" font-weight="bold" font-size="6.5" fill="#ffff00" textLength="30" lengthAdjust="spacingAndGlyphs">SECTION</text></g><rect x="671.5" y="336.5" width="45" height="47" fill="#696969" stroke="#8c8c8c" stroke-width="1"/><g transform="translate(671 336)" ><text x="23" y="9" text-anchor="middle" font-family="Liberation Sans" font-weight="bold" font-size="6.5" fill="#e8e8e8" textLength="24" lengthAdjust="spacingAndGlyphs">CROSS</text><path d="M13 12L34 11L34 32L13 33Z" fill="url(#chkW)"/><path d="M4.5 17.5H26.5V37.5H4.5ZM19.5 11.5H40.5V31.5H19.5V11.5M4.5 17.5L19.5 11.5M26.5 17.5L40.5 11.5M26.5 37.5L40.5 31.5M4.5 37.5L19.5 31.5" fill="none" stroke="#e8e8e8" stroke-width="1"/><text x="23" y="45" text-anchor="middle" font-family="Liberation Sans" font-weight="bold" font-size="6.5" fill="#e8e8e8" textLength="30" lengthAdjust="spacingAndGlyphs">SECTION</text></g><rect x="718.5" y="336.5" width="45" height="47" fill="#696969" stroke="#8c8c8c" stroke-width="1"/><g transform="translate(718 336)" ><text x="23" y="9" text-anchor="middle" font-family="Liberation Sans" font-weight="bold" font-size="6.5" fill="#e8e8e8" textLength="24" lengthAdjust="spacingAndGlyphs">CROSS</text><path d="M13 12L34 11L34 32L13 33Z" fill="url(#chkW)"/><path d="M4.5 17.5H26.5V37.5H4.5ZM19.5 11.5H40.5V31.5H19.5V11.5M4.5 17.5L19.5 11.5M26.5 17.5L40.5 11.5M26.5 37.5L40.5 31.5M4.5 37.5L19.5 31.5" fill="none" stroke="#e8e8e8" stroke-width="1"/><text x="23" y="45" text-anchor="middle" font-family="Liberation Sans" font-weight="bold" font-size="6.5" fill="#e8e8e8" textLength="30" lengthAdjust="spacingAndGlyphs">SECTION</text></g></svg><div class="t " style="left:582px;top:5px;font-size:18.5px;"><span class="y" style="letter-spacing:-0.25px">21−aug−1997,04:05:00</span>&nbsp; <span style="letter-spacing:0.1px">Planar cross−section plot.&nbsp; Contour of</span></div><div class="t " style="left:582px;top:32px;font-size:18.2px;">maxdz using: rhb_3d.</div><div class="t " style="left:589px;top:302.5px;font-size:10.3px;width:30px;text-align:right">0</div><div class="t " style="left:589px;top:246.24px;font-size:10.3px;width:30px;text-align:right">4</div><div class="t " style="left:589px;top:189.98000000000002px;font-size:10.3px;width:30px;text-align:right">8</div><div class="t " style="left:589px;top:133.72px;font-size:10.3px;width:30px;text-align:right">12</div><div class="t " style="left:589px;top:77.46000000000001px;font-size:10.3px;width:30px;text-align:right">16</div><div class="t " style="left:589px;top:21.19999999999999px;font-size:10.3px;width:30px;text-align:right">20</div><div class="t " style="left:602.5px;top:314px;font-size:10.3px;width:40px;text-align:center">0.0</div><div class="t " style="left:709.0px;top:314px;font-size:10.3px;width:40px;text-align:center">8.0</div><div class="t " style="left:815.5px;top:314px;font-size:10.3px;width:40px;text-align:center">16.0</div><div class="t " style="left:922.0px;top:314px;font-size:10.3px;width:40px;text-align:center">24.0</div><div class="t " style="left:1037px;top:314px;font-size:10.3px;">32</div><div class="t " style="left:802px;top:323px;font-size:10px;letter-spacing:0.2px">Distance in km</div><div class="t mono" style="left:593px;top:219px;font-size:12px;font-weight:bold;letter-spacing:0.9px;transform-origin:0 0;transform:rotate(-90deg)">km above MSL</div><div class="t " style="left:1050px;top:34px;font-size:11.5px;">maxdz</div><div class="t " style="left:1065px;top:55px;font-size:12px;">62.5</div><div class="t " style="left:1065px;top:72px;font-size:12px;">57.5</div><div class="t " style="left:1065px;top:89px;font-size:12px;">52.5</div><div class="t " style="left:1065px;top:106px;font-size:12px;">47.5</div><div class="t " style="left:1065px;top:123px;font-size:12px;">42.5</div><div class="t " style="left:1065px;top:140px;font-size:12px;">37.5</div><div class="t " style="left:1065px;top:157px;font-size:12px;">32.5</div><div class="t " style="left:1065px;top:174px;font-size:12px;">27.5</div><div class="t " style="left:1065px;top:191px;font-size:12px;">22.5</div><div class="t " style="left:1065px;top:208px;font-size:12px;">17.5</div><div class="t " style="left:1065px;top:225px;font-size:12px;">12.5</div><div class="t " style="left:1065px;top:242px;font-size:12px;">7.5</div><div class="t " style="left:1065px;top:259px;font-size:12px;">2.5</div><div class="t " style="left:1065px;top:276px;font-size:12px;">−2.5</div><div class="t " style="left:1065px;top:293px;font-size:12px;">−7.5</div><div class="t " style="left:1065px;top:310px;font-size:12px;">−12.5</div></div></div>
<div class="a" style="left:1132px;top:2px;width:1px;height:384px;background:repeating-linear-gradient(180deg,#fff 0 1px,transparent 1px 2px)"></div>
<div class="w" style="left:574px;top:387px;width:561px;height:383px;background:#000;"><div class="pg" style="left:-574px;top:-387px"><svg width="1280" height="1024" viewBox="0 0 1280 1024"><g shape-rendering="crispEdges"><rect x="762" y="660" width="26" height="23" fill="#0a8c0a"/><path d="M769 660L776 660L779 683L770 683Z" fill="#0a5c0a"/><path d="M776 660L783 660L788 683L779 683Z" fill="#c0c0c0"/><path d="M783 660L788 660L788 683L788 676Z" fill="#b05010"/><rect x="843" y="649" width="130" height="34" fill="#00f000"/><path d="M843 649L855 649L857 660L859 683L843 683Z" fill="#00bfff"/><path d="M843 666L848 676L849 683L843 683Z" fill="#1080f0"/><path d="M873 649L926 649L920 656L908 660L903 672L898 683L885 683L881 668L879 658Z" fill="#0aa80a"/><path d="M942 649L973 649L973 683L947 683L944 664Z" fill="#00bfff"/><rect x="973" y="660" width="78" height="23" fill="#1080f0"/><path d="M973 660L973 672L963 683L973 683Z" fill="#1080f0"/><path d="M982 683L993 675L998 668L1001 675L1006 683Z" fill="#0000c8"/><path d="M1005 660L1051 660L1051 683L1015 683L1008 672Z" fill="#00bfff"/><path d="M1010 660L1051 660L1051 683L1022 683L1013 672Z" fill="#00f000"/><path d="M1016 660L1051 660L1051 683L1030 682L1020 672Z" fill="#0aa80a"/><path d="M1021 660L1051 660L1051 680L1036 678L1026 670Z" fill="#0a8c0a"/><path d="M1026 660L1051 660L1051 678L1040 675L1031 668Z" fill="#0a5c0a"/><rect x="1028" y="649" width="23" height="11" fill="#b05010"/><path d="M1028 649L1034 649L1033 660L1036 668L1044 673L1051 676L1051 660L1028 660Z" fill="#c0c0c0"/><path d="M1033 649L1051 649L1051 672L1044 668L1038 662L1035 655Z" fill="#b05010"/><path d="M1044 649L1051 649L1051 660L1047 656Z" fill="#e0a060"/></g><path d="M624.5 414.5V695.5H1050.5V414.5H624.5M624.5 695.5H635.5M1050.5 695.5H1039.5M624.5 667.5H635.5M1050.5 667.5H1039.5M624.5 639.5H635.5M1050.5 639.5H1039.5M624.5 611.5H635.5M1050.5 611.5H1039.5M624.5 582.5H635.5M1050.5 582.5H1039.5M624.5 554.5H635.5M1050.5 554.5H1039.5M624.5 526.5H635.5M1050.5 526.5H1039.5M624.5 498.5H635.5M1050.5 498.5H1039.5M624.5 470.5H635.5M1050.5 470.5H1039.5M624.5 442.5H635.5M1050.5 442.5H1039.5M624.5 414.5H635.5M1050.5 414.5H1039.5M624.5 695.5V688.5M624.5 414.5V421.5M677.5 695.5V688.5M677.5 414.5V421.5M730.5 695.5V688.5M730.5 414.5V421.5M784.5 695.5V688.5M784.5 414.5V421.5M837.5 695.5V688.5M837.5 414.5V421.5M890.5 695.5V688.5M890.5 414.5V421.5M944.5 695.5V688.5M944.5 414.5V421.5M997.5 695.5V688.5M997.5 414.5V421.5M1050.5 695.5V688.5M1050.5 414.5V421.5" stroke="#fff" stroke-width="1" fill="none" shape-rendering="crispEdges"/><path d="M1051 412.5H1134M1051 719.5H1134" stroke="#a0a0a0" stroke-width="1" fill="none" shape-rendering="crispEdges"/><rect x="1052" y="436" width="10" height="11" fill="#ff0000"/><rect x="1052" y="447" width="10" height="11" fill="#d00000"/><rect x="1052" y="458" width="10" height="11" fill="#900000"/><rect x="1052" y="469" width="10" height="11" fill="#e05000"/><rect x="1052" y="480" width="10" height="11" fill="#ff8000"/><rect x="1052" y="491" width="10" height="11" fill="#ff5050"/><rect x="1052" y="502" width="10" height="11" fill="#ff8888"/><rect x="1052" y="513" width="10" height="11" fill="#ffc0c0"/><rect x="1052" y="524" width="10" height="11" fill="#ffff00"/><rect x="1052" y="535" width="10" height="11" fill="#ffb020"/><rect x="1052" y="546" width="10" height="11" fill="#e09860"/><rect x="1052" y="557" width="10" height="11" fill="#b05010"/><rect x="1052" y="568" width="10" height="11" fill="#c0c0c0"/><rect x="1052" y="579" width="10" height="11" fill="#0a5c0a"/><rect x="1052" y="590" width="10" height="11" fill="#0a7a0a"/><rect x="1052" y="601" width="10" height="11" fill="#0aa80a"/><rect x="1052" y="612" width="10" height="11" fill="#00f000"/><rect x="1052" y="623" width="10" height="11" fill="#00bfff"/><rect x="1052" y="634" width="10" height="11" fill="#1080f0"/><rect x="1052" y="645" width="10" height="11" fill="#0000d0"/><rect x="1052" y="656" width="10" height="11" fill="#0000a8"/><rect x="1052" y="667" width="10" height="11" fill="#000080"/><rect x="1052" y="678" width="10" height="11" fill="#9090c0"/><rect x="1052" y="689" width="10" height="11" fill="#606090"/><rect x="1052" y="700" width="10" height="11" fill="#707070"/><rect x="579.5" y="720.5" width="45" height="47" fill="#191970" stroke="#8c8c8c" stroke-width="1"/><g transform="translate(579 720)" ><path d="M6.7 11.5C9 7.5 14 6 19 8S30 12 38 8.5L6 39.5C10 36 15 34.5 21 36.5S33 41.5 38.7 35" fill="none" stroke="#ffff00" stroke-width="1.4" stroke-linejoin="round" stroke-linecap="round"/><path d="M38 8.5L6 39.5L9 39L36.5 12Z" fill="#ffff00"/></g><rect x="626.5" y="720.5" width="45" height="47" fill="#191970" stroke="#8c8c8c" stroke-width="1"/><g transform="translate(626 720)" ><text x="23" y="9" text-anchor="middle" font-family="Liberation Sans" font-weight="bold" font-size="6.5" fill="#ffff00" textLength="24" lengthAdjust="spacingAndGlyphs">CROSS</text><path d="M13 12L34 11L34 32L13 33Z" fill="url(#chkY)"/><path d="M4.5 17.5H26.5V37.5H4.5ZM19.5 11.5H40.5V31.5H19.5V11.5M4.5 17.5L19.5 11.5M26.5 17.5L40.5 11.5M26.5 37.5L40.5 31.5M4.5 37.5L19.5 31.5" fill="none" stroke="#ffff00" stroke-width="1"/><text x="23" y="45" text-anchor="middle" font-family="Liberation Sans" font-weight="bold" font-size="6.5" fill="#ffff00" textLength="30" lengthAdjust="spacingAndGlyphs">SECTION</text></g><rect x="673.5" y="720.5" width="45" height="47" fill="#696969" stroke="#8c8c8c" stroke-width="1"/><g transform="translate(673 720)" ><text x="23" y="9" text-anchor="middle" font-family="Liberation Sans" font-weight="bold" font-size="6.5" fill="#e8e8e8" textLength="24" lengthAdjust="spacingAndGlyphs">CROSS</text><path d="M13 12L34 11L34 32L13 33Z" fill="url(#chkW)"/><path d="M4.5 17.5H26.5V37.5H4.5ZM19.5 11.5H40.5V31.5H19.5V11.5M4.5 17.5L19.5 11.5M26.5 17.5L40.5 11.5M26.5 37.5L40.5 31.5M4.5 37.5L19.5 31.5" fill="none" stroke="#e8e8e8" stroke-width="1"/><text x="23" y="45" text-anchor="middle" font-family="Liberation Sans" font-weight="bold" font-size="6.5" fill="#e8e8e8" textLength="30" lengthAdjust="spacingAndGlyphs">SECTION</text></g><rect x="720.5" y="720.5" width="45" height="47" fill="#696969" stroke="#8c8c8c" stroke-width="1"/><g transform="translate(720 720)" ><text x="23" y="9" text-anchor="middle" font-family="Liberation Sans" font-weight="bold" font-size="6.5" fill="#e8e8e8" textLength="24" lengthAdjust="spacingAndGlyphs">CROSS</text><path d="M13 12L34 11L34 32L13 33Z" fill="url(#chkW)"/><path d="M4.5 17.5H26.5V37.5H4.5ZM19.5 11.5H40.5V31.5H19.5V11.5M4.5 17.5L19.5 11.5M26.5 17.5L40.5 11.5M26.5 37.5L40.5 31.5M4.5 37.5L19.5 31.5" fill="none" stroke="#e8e8e8" stroke-width="1"/><text x="23" y="45" text-anchor="middle" font-family="Liberation Sans" font-weight="bold" font-size="6.5" fill="#e8e8e8" textLength="30" lengthAdjust="spacingAndGlyphs">SECTION</text></g></svg><div class="t " style="left:584px;top:389px;font-size:18.5px;"><span class="y" style="letter-spacing:-0.25px">21−aug−1997,04:05:00</span>&nbsp; <span style="letter-spacing:0.1px">Planar cross−section plot.&nbsp; Contour of</span></div><div class="t " style="left:584px;top:416px;font-size:18.2px;">radialvelocity using: rhb_3d.</div><div class="t " style="left:591px;top:686.5px;font-size:10.3px;width:30px;text-align:right">0</div><div class="t " style="left:591px;top:630.24px;font-size:10.3px;width:30px;text-align:right">4</div><div class="t " style="left:591px;top:573.98px;font-size:10.3px;width:30px;text-align:right">8</div><div class="t " style="left:591px;top:517.72px;font-size:10.3px;width:30px;text-align:right">12</div><div class="t " style="left:591px;top:461.46000000000004px;font-size:10.3px;width:30px;text-align:right">16</div><div class="t " style="left:591px;top:405.2px;font-size:10.3px;width:30px;text-align:right">20</div><div class="t " style="left:604.5px;top:698px;font-size:10.3px;width:40px;text-align:center">0.0</div><div class="t " style="left:711.0px;top:698px;font-size:10.3px;width:40px;text-align:center">8.0</div><div class="t " style="left:817.5px;top:698px;font-size:10.3px;width:40px;text-align:center">16.0</div><div class="t " style="left:924.0px;top:698px;font-size:10.3px;width:40px;text-align:center">24.0</div><div class="t " style="left:1039px;top:698px;font-size:10.3px;">32</div><div class="t " style="left:804px;top:707px;font-size:10px;letter-spacing:0.2px">Distance in km</div><div class="t mono" style="left:595px;top:603px;font-size:12px;font-weight:bold;letter-spacing:0.9px;transform-origin:0 0;transform:rotate(-90deg)">km above MSL</div><div class="t " style="left:1052px;top:417px;font-size:12.5px;letter-spacing:0.25px">radialvelocity</div><div class="t " style="left:1067px;top:436px;font-size:12px;">24.0</div><div class="t " style="left:1067px;top:447px;font-size:12px;">22.0</div><div class="t " style="left:1067px;top:458px;font-size:12px;">20.0</div><div class="t " style="left:1067px;top:469px;font-size:12px;">18.0</div><div class="t " style="left:1067px;top:480px;font-size:12px;">16.0</div><div class="t " style="left:1067px;top:491px;font-size:12px;">14.0</div><div class="t " style="left:1067px;top:502px;font-size:12px;">12.0</div><div class="t " style="left:1067px;top:513px;font-size:12px;">10.0</div><div class="t " style="left:1067px;top:524px;font-size:12px;">8.0</div><div class="t " style="left:1067px;top:535px;font-size:12px;">6.0</div><div class="t " style="left:1067px;top:546px;font-size:12px;">4.0</div><div class="t " style="left:1067px;top:557px;font-size:12px;">2.0</div><div class="t " style="left:1067px;top:568px;font-size:12px;">0.0</div><div class="t " style="left:1067px;top:579px;font-size:12px;">−2.0</div><div class="t " style="left:1067px;top:590px;font-size:12px;">−4.0</div><div class="t " style="left:1067px;top:601px;font-size:12px;">−6.0</div><div class="t " style="left:1067px;top:612px;font-size:12px;">−8.0</div><div class="t " style="left:1067px;top:623px;font-size:12px;">−10.0</div><div class="t " style="left:1067px;top:634px;font-size:12px;">−12.0</div><div class="t " style="left:1067px;top:645px;font-size:12px;">−14.0</div><div class="t " style="left:1067px;top:656px;font-size:12px;">−16.0</div><div class="t " style="left:1067px;top:667px;font-size:12px;">−18.0</div><div class="t " style="left:1067px;top:678px;font-size:12px;">−20.0</div><div class="t " style="left:1067px;top:689px;font-size:12px;">−22.0</div><div class="t " style="left:1067px;top:700px;font-size:12px;">−24.0</div></div></div>
<div class="a" style="left:572px;top:386px;width:563px;height:1px;background:#000;"></div>
<div class="a" style="left:572px;top:386px;width:563px;height:1px;background:repeating-linear-gradient(90deg,#fff 0 1px,transparent 1px 2px)"></div>
<div class="a" style="left:1134px;top:387px;width:1px;height:383px;background:repeating-linear-gradient(180deg,#fff 0 1px,transparent 1px 2px)"></div>
<div class="a" style="left:573px;top:386px;width:1px;height:386px;background:repeating-linear-gradient(180deg,#fff 0 1px,transparent 1px 2px)"></div>
<div class="w" style="left:573px;top:770px;width:508px;height:103px;background:#000;"><div class="pg" style="left:-573px;top:-770px"><div class="a" style="left:571px;top:800px;width:504px;height:68px;border:2px solid #fff"></div><div class="a" style="left:576px;top:775px;width:46px;height:24px;border:2px solid #fff;color:#fff;font-size:12px;line-height:22px;text-align:center"><span style="display:inline-block;transform:scaleX(0.84)">Dismiss</span></div><div class="t mono" style="left:574px;top:806px;font-size:15px;line-height:15px;white-space:pre;-webkit-text-stroke:0.4px #fff">PLATFORM   FIELD      ALTITUDE       TIME</div><div class="t mono" style="left:574px;top:821px;font-size:15px;line-height:15px;white-space:pre;-webkit-text-stroke:0.4px #fff">rhb_lowprf maxdz      0.50 km MSL    21-Aug-97,4:00:23</div><div class="t mono" style="left:574px;top:836px;font-size:15px;line-height:15px;white-space:pre;-webkit-text-stroke:0.4px #fff">rhb_3d     maxdz      0.50 km MSL    21-Aug-97,4:01:19</div></div></div>
<div class="a" style="left:1081px;top:770px;width:41px;height:5px;background:#000;"></div>
<div class="a" style="left:1081px;top:775px;width:41px;height:1px;background:repeating-linear-gradient(90deg,#fff 0 1px,transparent 1px 2px)"></div>
<div class="a" style="left:1121px;top:770px;width:1px;height:5px;background:repeating-linear-gradient(180deg,#fff 0 1px,transparent 1px 2px)"></div>
<div class="a" style="left:1080px;top:775px;width:1px;height:98px;background:repeating-linear-gradient(180deg,#fff 0 1px,transparent 1px 2px)"></div>
<div class="a" style="left:573px;top:873px;width:508px;height:1px;background:repeating-linear-gradient(90deg,#fff 0 1px,transparent 1px 2px)"></div>
<div class="a" style="left:573px;top:770px;width:562px;height:1px;background:repeating-linear-gradient(90deg,#fff 0 1px,transparent 1px 2px)"></div>
<div class="a" style="left:1150px;top:72px;width:102px;height:660px;background:#5f9ea0;"></div><div class="a" style="left:1151px;top:73px;width:100px;height:19px;background:#006400;"></div><div class="a" style="left:1155px;top:96px;width:92px;height:632px;border:2px solid #000"></div><div class="t " style="left:1194px;top:75px;font-size:14px;font-weight:bold">icon</div><svg width="1280" height="1024" viewBox="0 0 1280 1024"><defs><pattern id="chkY" width="2" height="2" patternUnits="userSpaceOnUse"><rect width="1" height="1" fill="#ffff00"/><rect x="1" y="1" width="1" height="1" fill="#ffff00"/></pattern><pattern id="chkW" width="2" height="2" patternUnits="userSpaceOnUse"><rect width="1" height="1" fill="#e0e0e0"/><rect x="1" y="1" width="1" height="1" fill="#e0e0e0"/></pattern><pattern id="hatch" width="2" height="2" patternUnits="userSpaceOnUse"><rect width="2" height="2" fill="#fff8dc"/><rect width="1" height="1" fill="#444"/><rect x="1" y="1" width="1" height="1" fill="#444"/></pattern><pattern id="stip" width="2" height="2" patternUnits="userSpaceOnUse"><rect width="2" height="2" fill="#e6e6e6"/><rect width="1" height="1" fill="#222"/><rect x="1" y="1" width="1" height="1" fill="#222"/></pattern></defs><rect x="1153.5" y="74.5" width="15" height="16" fill="#006400" stroke="#e0e0e0" stroke-width="1"/><rect x="1171.5" y="74.5" width="15" height="16" fill="#006400" stroke="#e0e0e0" stroke-width="1"/><rect x="1215.5" y="74.5" width="15" height="16" fill="#006400" stroke="#e0e0e0" stroke-width="1"/><rect x="1234.5" y="74.5" width="15" height="16" fill="#006400" stroke="#e0e0e0" stroke-width="1"/><circle cx="1161" cy="82.5" r="4.5" fill="#e0e0e0"/><rect x="1175.5" y="77.5" width="7" height="10" fill="none" stroke="#e0e0e0"/><path d="M1177 80.5H1181M1177 82.5H1181M1177 84.5H1181" stroke="#e0e0e0"/><circle cx="1223" cy="82.5" r="1.5" fill="none" stroke="#e0e0e0"/><path d="M1238.5 78.5H1246.5V86.5H1238.5ZM1238.5 82.5H1242.5V78.5" fill="none" stroke="#e0e0e0"/><rect x="1161" y="102" width="52" height="48" fill="#000"/><rect x="1163" y="104" width="48" height="44" fill="#191970"/><rect x="1161" y="154" width="52" height="48" fill="#000"/><rect x="1163" y="156" width="48" height="44" fill="#191970"/><rect x="1161" y="206" width="52" height="48" fill="#000"/><rect x="1163" y="208" width="48" height="44" fill="#191970"/><rect x="1161" y="258" width="52" height="48" fill="#000"/><rect x="1163" y="260" width="48" height="44" fill="#191970"/><rect x="1161" y="310" width="52" height="48" fill="#000"/><rect x="1163" y="312" width="48" height="44" fill="#191970"/><rect x="1161" y="362" width="52" height="48" fill="#000"/><rect x="1163" y="364" width="48" height="44" fill="#191970"/><g transform="translate(1164 102)" ><path d="M6.7 11.5C9 7.5 14 6 19 8S30 12 38 8.5L6 39.5C10 36 15 34.5 21 36.5S33 41.5 38.7 35" fill="none" stroke="#ffff00" stroke-width="1.4" stroke-linejoin="round" stroke-linecap="round"/><path d="M38 8.5L6 39.5L9 39L36.5 12Z" fill="#ffff00"/></g><g transform="translate(1163 156)" ><path d="M14 3H22L25 8V12H11V8Z" fill="url(#chkY)"/><path d="M22 3L25 8H22Z" fill="#ffff00"/><path d="M11 10L8 13H34L31 10ZM6 14H36V18H6Z" fill="#ffff00"/><path d="M6 18H36V24L34 26H8L6 24Z" fill="url(#chkY)"/><rect x="27" y="20" width="7" height="2.5" fill="#191970"/><text x="21" y="36" text-anchor="middle" font-family="Liberation Sans" font-weight="bold" font-size="7.5" fill="#ffff00" textLength="24" lengthAdjust="spacingAndGlyphs">PRINT</text></g><g transform="translate(1163 206)" ><path d="M4 17C12 16 20 23 23 33C23 37 22 41 21 43L4 43Z" fill="url(#chkY)"/><path d="M15 24L19 25L22 30L21 35L16 34L13 29Z" fill="#ffff00"/><path d="M4 39L6 36L11 36L12 43L4 43Z" fill="#ffff00"/><path d="M35 5L37.5 8L35 11L32.5 8Z" fill="#ffff00"/><path d="M22 26L34 10" stroke="#ffff00" stroke-width="1.5" stroke-dasharray="1 1.5" fill="none"/><rect x="6" y="6" width="1.5" height="1.5" fill="#ffff00"/><rect x="8" y="8" width="1.5" height="1.5" fill="#ffff00"/><rect x="21" y="5" width="1.5" height="1.5" fill="#ffff00"/><rect x="17" y="10" width="1.5" height="1.5" fill="#ffff00"/><rect x="22" y="9" width="1.5" height="1.5" fill="#ffff00"/><rect x="41" y="5" width="1.5" height="1.5" fill="#ffff00"/><rect x="42" y="13" width="1.5" height="1.5" fill="#ffff00"/><rect x="30" y="27" width="1.5" height="1.5" fill="#ffff00"/><rect x="34" y="31" width="1.5" height="1.5" fill="#ffff00"/><rect x="38" y="29" width="1.5" height="1.5" fill="#ffff00"/><rect x="36" y="35" width="1.5" height="1.5" fill="#ffff00"/><rect x="40" y="40" width="1.5" height="1.5" fill="#ffff00"/><rect x="27" y="41" width="1.5" height="1.5" fill="#ffff00"/><rect x="18" y="16" width="1.5" height="1.5" fill="#ffff00"/></g><g transform="translate(1163 260)" ><circle cx="24" cy="17" r="15" fill="none" stroke="#ffff00" stroke-width="1"/><circle cx="24" cy="17" r="9.9" fill="none" stroke="#ffff00" stroke-width="1"/><circle cx="24" cy="17" r="4.5" fill="none" stroke="#ffff00" stroke-width="1"/><path d="M28.5 17.0L39.0 17.0M27.2 20.2L34.6 27.6M24.0 21.5L24.0 32.0M20.8 20.2L13.4 27.6M19.5 17.0L9.0 17.0M20.8 13.8L13.4 6.4M24.0 12.5L24.0 2.0M27.2 13.8L34.6 6.4" stroke="#ffff00" stroke-width="1" fill="none"/><text x="24" y="41" text-anchor="middle" font-family="Liberation Sans" font-size="8.5" fill="#ffff00" textLength="37" lengthAdjust="spacingAndGlyphs">OVERLAYS</text></g><g transform="translate(1177 319)" ><path d="M0 0C2 10 9 19 22.5 21.5" fill="none" stroke="#ffff00" stroke-width="1.8" stroke-linecap="round"/><path d="M7 11.5L11.5 10.5L11.5 17" fill="none" stroke="#ffff00" stroke-width="1"/><path d="M6.5 14L10 14L10.5 30L3.5 30L4.5 24Z" fill="#ffff00"/></g><g transform="translate(1167 379)" ><path d="M5 18V8H9L11 16" fill="none" stroke="#ffff00" stroke-width="1"/><circle cx="21" cy="6.5" r="3.2" fill="none" stroke="#ffff00" stroke-width="1"/><path d="M20 10V16M22 10V16M33.5 0V16" stroke="#ffff00" stroke-width="1" fill="none"/><path d="M3 16H39L36 23M3 16C3 19 4 21 6 23" fill="none" stroke="#ffff00" stroke-width="1"/><path d="M0 27V22L2 23L4 21L6 23L9 21L12 23L15 21L18 23L21 21L24 23L27 21L30 23L33 21L36 23L39 21L40 22V27Z" fill="#ffff00"/></g></svg>
<div class="a" style="left:1150px;top:72px;width:102px;height:1px;background:repeating-linear-gradient(90deg,#fff 0 1px,transparent 1px 2px)"></div>
<div class="a" style="left:1150px;top:72px;width:1px;height:660px;background:repeating-linear-gradient(180deg,#fff 0 1px,transparent 1px 2px)"></div>
<div class="a" style="left:1251px;top:72px;width:1px;height:660px;background:repeating-linear-gradient(180deg,#fff 0 1px,transparent 1px 2px)"></div>
<div class="a" style="left:1150px;top:731px;width:102px;height:1px;background:repeating-linear-gradient(90deg,#fff 0 1px,transparent 1px 2px)"></div>
<div class="a" style="left:1135px;top:420px;width:5px;height:326px;background:#fff;"></div>
<div class="a" style="left:0;top:0;width:1133px;height:2px;background:#000 repeating-conic-gradient(#fff 0 25%,#000 0 50%) 0 0/2px 2px"></div>
<div class="a" style="left:0px;top:0px;width:145px;height:2px;background:#1c7a1c;"></div>
<div class="a" style="left:200px;top:0px;width:52px;height:2px;background:#0000cd;"></div>
<div class="a" style="left:572px;top:0px;width:161px;height:2px;background:#1c7a1c;"></div>
<div class="a" style="left:973px;top:0px;width:38px;height:2px;background:#0000cd;"></div>
<div class="a" style="left:1102px;top:0px;width:31px;height:2px;background:#000;"></div>
<div class="a" style="left:1133px;top:0px;width:147px;height:2px;background:#0000cd;"></div>
<div class="a" style="left:0px;top:2px;width:1133px;height:1px;background:repeating-linear-gradient(90deg,#fff 0 1px,transparent 1px 2px)"></div>
</body></html>
